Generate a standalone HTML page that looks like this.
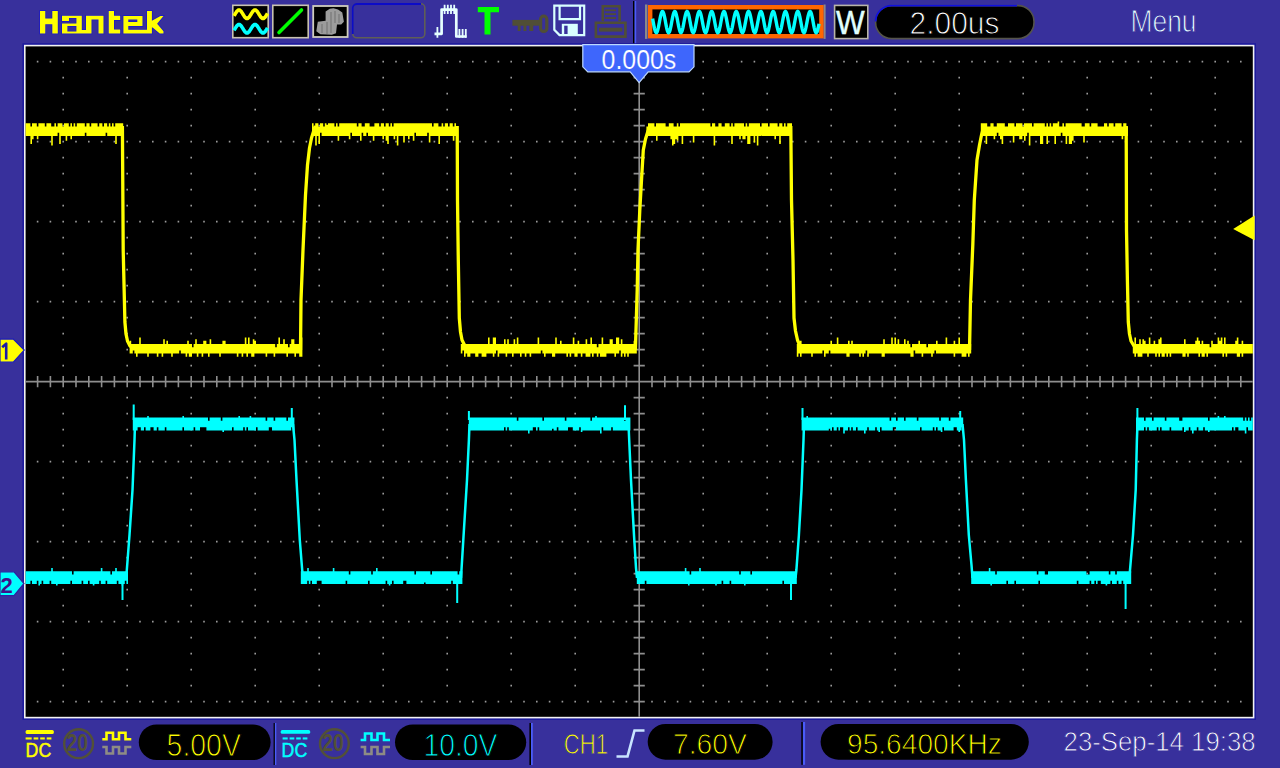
<!DOCTYPE html>
<html><head><meta charset="utf-8"><style>
html,body{margin:0;padding:0;width:1280px;height:768px;overflow:hidden;background:#38309c}
text{font-family:"Liberation Sans",sans-serif}
</style></head><body>
<svg width="1280" height="768" viewBox="0 0 1280 768" style="position:absolute;left:0;top:0">
<rect width="1280" height="768" fill="#38309c"/>
<rect x="22.4" y="43.2" width="1233.6" height="676.8" fill="#1c1a9c"/>
<rect x="24" y="44.8" width="1230.4" height="673.6" fill="#f2f2f2"/>
<rect x="25.6" y="46.4" width="1227.2" height="670.4" fill="#000"/>
<path d="M36.8 60.8h1.6v1.6h-1.6zM49.6 60.8h1.6v1.6h-1.6zM62.4 60.8h1.6v1.6h-1.6zM75.2 60.8h1.6v1.6h-1.6zM88.0 60.8h1.6v1.6h-1.6zM100.8 60.8h1.6v1.6h-1.6zM113.6 60.8h1.6v1.6h-1.6zM126.4 60.8h1.6v1.6h-1.6zM139.2 60.8h1.6v1.6h-1.6zM152.0 60.8h1.6v1.6h-1.6zM164.8 60.8h1.6v1.6h-1.6zM177.6 60.8h1.6v1.6h-1.6zM190.4 60.8h1.6v1.6h-1.6zM203.2 60.8h1.6v1.6h-1.6zM216.0 60.8h1.6v1.6h-1.6zM228.8 60.8h1.6v1.6h-1.6zM241.6 60.8h1.6v1.6h-1.6zM254.4 60.8h1.6v1.6h-1.6zM267.2 60.8h1.6v1.6h-1.6zM280.0 60.8h1.6v1.6h-1.6zM292.8 60.8h1.6v1.6h-1.6zM305.6 60.8h1.6v1.6h-1.6zM318.4 60.8h1.6v1.6h-1.6zM331.2 60.8h1.6v1.6h-1.6zM344.0 60.8h1.6v1.6h-1.6zM356.8 60.8h1.6v1.6h-1.6zM369.6 60.8h1.6v1.6h-1.6zM382.4 60.8h1.6v1.6h-1.6zM395.2 60.8h1.6v1.6h-1.6zM408.0 60.8h1.6v1.6h-1.6zM420.8 60.8h1.6v1.6h-1.6zM433.6 60.8h1.6v1.6h-1.6zM446.4 60.8h1.6v1.6h-1.6zM459.2 60.8h1.6v1.6h-1.6zM472.0 60.8h1.6v1.6h-1.6zM484.8 60.8h1.6v1.6h-1.6zM497.6 60.8h1.6v1.6h-1.6zM510.4 60.8h1.6v1.6h-1.6zM523.2 60.8h1.6v1.6h-1.6zM536.0 60.8h1.6v1.6h-1.6zM548.8 60.8h1.6v1.6h-1.6zM561.6 60.8h1.6v1.6h-1.6zM574.4 60.8h1.6v1.6h-1.6zM587.2 60.8h1.6v1.6h-1.6zM600.0 60.8h1.6v1.6h-1.6zM612.8 60.8h1.6v1.6h-1.6zM625.6 60.8h1.6v1.6h-1.6zM651.2 60.8h1.6v1.6h-1.6zM664.0 60.8h1.6v1.6h-1.6zM676.8 60.8h1.6v1.6h-1.6zM689.6 60.8h1.6v1.6h-1.6zM702.4 60.8h1.6v1.6h-1.6zM715.2 60.8h1.6v1.6h-1.6zM728.0 60.8h1.6v1.6h-1.6zM740.8 60.8h1.6v1.6h-1.6zM753.6 60.8h1.6v1.6h-1.6zM766.4 60.8h1.6v1.6h-1.6zM779.2 60.8h1.6v1.6h-1.6zM792.0 60.8h1.6v1.6h-1.6zM804.8 60.8h1.6v1.6h-1.6zM817.6 60.8h1.6v1.6h-1.6zM830.4 60.8h1.6v1.6h-1.6zM843.2 60.8h1.6v1.6h-1.6zM856.0 60.8h1.6v1.6h-1.6zM868.8 60.8h1.6v1.6h-1.6zM881.6 60.8h1.6v1.6h-1.6zM894.4 60.8h1.6v1.6h-1.6zM907.2 60.8h1.6v1.6h-1.6zM920.0 60.8h1.6v1.6h-1.6zM932.8 60.8h1.6v1.6h-1.6zM945.6 60.8h1.6v1.6h-1.6zM958.4 60.8h1.6v1.6h-1.6zM971.2 60.8h1.6v1.6h-1.6zM984.0 60.8h1.6v1.6h-1.6zM996.8 60.8h1.6v1.6h-1.6zM1009.6 60.8h1.6v1.6h-1.6zM1022.4 60.8h1.6v1.6h-1.6zM1035.2 60.8h1.6v1.6h-1.6zM1048.0 60.8h1.6v1.6h-1.6zM1060.8 60.8h1.6v1.6h-1.6zM1073.6 60.8h1.6v1.6h-1.6zM1086.4 60.8h1.6v1.6h-1.6zM1099.2 60.8h1.6v1.6h-1.6zM1112.0 60.8h1.6v1.6h-1.6zM1124.8 60.8h1.6v1.6h-1.6zM1137.6 60.8h1.6v1.6h-1.6zM1150.4 60.8h1.6v1.6h-1.6zM1163.2 60.8h1.6v1.6h-1.6zM1176.0 60.8h1.6v1.6h-1.6zM1188.8 60.8h1.6v1.6h-1.6zM1201.6 60.8h1.6v1.6h-1.6zM1214.4 60.8h1.6v1.6h-1.6zM1227.2 60.8h1.6v1.6h-1.6zM1240.0 60.8h1.6v1.6h-1.6zM36.8 140.8h1.6v1.6h-1.6zM49.6 140.8h1.6v1.6h-1.6zM62.4 140.8h1.6v1.6h-1.6zM75.2 140.8h1.6v1.6h-1.6zM88.0 140.8h1.6v1.6h-1.6zM100.8 140.8h1.6v1.6h-1.6zM113.6 140.8h1.6v1.6h-1.6zM126.4 140.8h1.6v1.6h-1.6zM139.2 140.8h1.6v1.6h-1.6zM152.0 140.8h1.6v1.6h-1.6zM164.8 140.8h1.6v1.6h-1.6zM177.6 140.8h1.6v1.6h-1.6zM190.4 140.8h1.6v1.6h-1.6zM203.2 140.8h1.6v1.6h-1.6zM216.0 140.8h1.6v1.6h-1.6zM228.8 140.8h1.6v1.6h-1.6zM241.6 140.8h1.6v1.6h-1.6zM254.4 140.8h1.6v1.6h-1.6zM267.2 140.8h1.6v1.6h-1.6zM280.0 140.8h1.6v1.6h-1.6zM292.8 140.8h1.6v1.6h-1.6zM305.6 140.8h1.6v1.6h-1.6zM318.4 140.8h1.6v1.6h-1.6zM331.2 140.8h1.6v1.6h-1.6zM344.0 140.8h1.6v1.6h-1.6zM356.8 140.8h1.6v1.6h-1.6zM369.6 140.8h1.6v1.6h-1.6zM382.4 140.8h1.6v1.6h-1.6zM395.2 140.8h1.6v1.6h-1.6zM408.0 140.8h1.6v1.6h-1.6zM420.8 140.8h1.6v1.6h-1.6zM433.6 140.8h1.6v1.6h-1.6zM446.4 140.8h1.6v1.6h-1.6zM459.2 140.8h1.6v1.6h-1.6zM472.0 140.8h1.6v1.6h-1.6zM484.8 140.8h1.6v1.6h-1.6zM497.6 140.8h1.6v1.6h-1.6zM510.4 140.8h1.6v1.6h-1.6zM523.2 140.8h1.6v1.6h-1.6zM536.0 140.8h1.6v1.6h-1.6zM548.8 140.8h1.6v1.6h-1.6zM561.6 140.8h1.6v1.6h-1.6zM574.4 140.8h1.6v1.6h-1.6zM587.2 140.8h1.6v1.6h-1.6zM600.0 140.8h1.6v1.6h-1.6zM612.8 140.8h1.6v1.6h-1.6zM625.6 140.8h1.6v1.6h-1.6zM651.2 140.8h1.6v1.6h-1.6zM664.0 140.8h1.6v1.6h-1.6zM676.8 140.8h1.6v1.6h-1.6zM689.6 140.8h1.6v1.6h-1.6zM702.4 140.8h1.6v1.6h-1.6zM715.2 140.8h1.6v1.6h-1.6zM728.0 140.8h1.6v1.6h-1.6zM740.8 140.8h1.6v1.6h-1.6zM753.6 140.8h1.6v1.6h-1.6zM766.4 140.8h1.6v1.6h-1.6zM779.2 140.8h1.6v1.6h-1.6zM792.0 140.8h1.6v1.6h-1.6zM804.8 140.8h1.6v1.6h-1.6zM817.6 140.8h1.6v1.6h-1.6zM830.4 140.8h1.6v1.6h-1.6zM843.2 140.8h1.6v1.6h-1.6zM856.0 140.8h1.6v1.6h-1.6zM868.8 140.8h1.6v1.6h-1.6zM881.6 140.8h1.6v1.6h-1.6zM894.4 140.8h1.6v1.6h-1.6zM907.2 140.8h1.6v1.6h-1.6zM920.0 140.8h1.6v1.6h-1.6zM932.8 140.8h1.6v1.6h-1.6zM945.6 140.8h1.6v1.6h-1.6zM958.4 140.8h1.6v1.6h-1.6zM971.2 140.8h1.6v1.6h-1.6zM984.0 140.8h1.6v1.6h-1.6zM996.8 140.8h1.6v1.6h-1.6zM1009.6 140.8h1.6v1.6h-1.6zM1022.4 140.8h1.6v1.6h-1.6zM1035.2 140.8h1.6v1.6h-1.6zM1048.0 140.8h1.6v1.6h-1.6zM1060.8 140.8h1.6v1.6h-1.6zM1073.6 140.8h1.6v1.6h-1.6zM1086.4 140.8h1.6v1.6h-1.6zM1099.2 140.8h1.6v1.6h-1.6zM1112.0 140.8h1.6v1.6h-1.6zM1124.8 140.8h1.6v1.6h-1.6zM1137.6 140.8h1.6v1.6h-1.6zM1150.4 140.8h1.6v1.6h-1.6zM1163.2 140.8h1.6v1.6h-1.6zM1176.0 140.8h1.6v1.6h-1.6zM1188.8 140.8h1.6v1.6h-1.6zM1201.6 140.8h1.6v1.6h-1.6zM1214.4 140.8h1.6v1.6h-1.6zM1227.2 140.8h1.6v1.6h-1.6zM1240.0 140.8h1.6v1.6h-1.6zM36.8 220.8h1.6v1.6h-1.6zM49.6 220.8h1.6v1.6h-1.6zM62.4 220.8h1.6v1.6h-1.6zM75.2 220.8h1.6v1.6h-1.6zM88.0 220.8h1.6v1.6h-1.6zM100.8 220.8h1.6v1.6h-1.6zM113.6 220.8h1.6v1.6h-1.6zM126.4 220.8h1.6v1.6h-1.6zM139.2 220.8h1.6v1.6h-1.6zM152.0 220.8h1.6v1.6h-1.6zM164.8 220.8h1.6v1.6h-1.6zM177.6 220.8h1.6v1.6h-1.6zM190.4 220.8h1.6v1.6h-1.6zM203.2 220.8h1.6v1.6h-1.6zM216.0 220.8h1.6v1.6h-1.6zM228.8 220.8h1.6v1.6h-1.6zM241.6 220.8h1.6v1.6h-1.6zM254.4 220.8h1.6v1.6h-1.6zM267.2 220.8h1.6v1.6h-1.6zM280.0 220.8h1.6v1.6h-1.6zM292.8 220.8h1.6v1.6h-1.6zM305.6 220.8h1.6v1.6h-1.6zM318.4 220.8h1.6v1.6h-1.6zM331.2 220.8h1.6v1.6h-1.6zM344.0 220.8h1.6v1.6h-1.6zM356.8 220.8h1.6v1.6h-1.6zM369.6 220.8h1.6v1.6h-1.6zM382.4 220.8h1.6v1.6h-1.6zM395.2 220.8h1.6v1.6h-1.6zM408.0 220.8h1.6v1.6h-1.6zM420.8 220.8h1.6v1.6h-1.6zM433.6 220.8h1.6v1.6h-1.6zM446.4 220.8h1.6v1.6h-1.6zM459.2 220.8h1.6v1.6h-1.6zM472.0 220.8h1.6v1.6h-1.6zM484.8 220.8h1.6v1.6h-1.6zM497.6 220.8h1.6v1.6h-1.6zM510.4 220.8h1.6v1.6h-1.6zM523.2 220.8h1.6v1.6h-1.6zM536.0 220.8h1.6v1.6h-1.6zM548.8 220.8h1.6v1.6h-1.6zM561.6 220.8h1.6v1.6h-1.6zM574.4 220.8h1.6v1.6h-1.6zM587.2 220.8h1.6v1.6h-1.6zM600.0 220.8h1.6v1.6h-1.6zM612.8 220.8h1.6v1.6h-1.6zM625.6 220.8h1.6v1.6h-1.6zM651.2 220.8h1.6v1.6h-1.6zM664.0 220.8h1.6v1.6h-1.6zM676.8 220.8h1.6v1.6h-1.6zM689.6 220.8h1.6v1.6h-1.6zM702.4 220.8h1.6v1.6h-1.6zM715.2 220.8h1.6v1.6h-1.6zM728.0 220.8h1.6v1.6h-1.6zM740.8 220.8h1.6v1.6h-1.6zM753.6 220.8h1.6v1.6h-1.6zM766.4 220.8h1.6v1.6h-1.6zM779.2 220.8h1.6v1.6h-1.6zM792.0 220.8h1.6v1.6h-1.6zM804.8 220.8h1.6v1.6h-1.6zM817.6 220.8h1.6v1.6h-1.6zM830.4 220.8h1.6v1.6h-1.6zM843.2 220.8h1.6v1.6h-1.6zM856.0 220.8h1.6v1.6h-1.6zM868.8 220.8h1.6v1.6h-1.6zM881.6 220.8h1.6v1.6h-1.6zM894.4 220.8h1.6v1.6h-1.6zM907.2 220.8h1.6v1.6h-1.6zM920.0 220.8h1.6v1.6h-1.6zM932.8 220.8h1.6v1.6h-1.6zM945.6 220.8h1.6v1.6h-1.6zM958.4 220.8h1.6v1.6h-1.6zM971.2 220.8h1.6v1.6h-1.6zM984.0 220.8h1.6v1.6h-1.6zM996.8 220.8h1.6v1.6h-1.6zM1009.6 220.8h1.6v1.6h-1.6zM1022.4 220.8h1.6v1.6h-1.6zM1035.2 220.8h1.6v1.6h-1.6zM1048.0 220.8h1.6v1.6h-1.6zM1060.8 220.8h1.6v1.6h-1.6zM1073.6 220.8h1.6v1.6h-1.6zM1086.4 220.8h1.6v1.6h-1.6zM1099.2 220.8h1.6v1.6h-1.6zM1112.0 220.8h1.6v1.6h-1.6zM1124.8 220.8h1.6v1.6h-1.6zM1137.6 220.8h1.6v1.6h-1.6zM1150.4 220.8h1.6v1.6h-1.6zM1163.2 220.8h1.6v1.6h-1.6zM1176.0 220.8h1.6v1.6h-1.6zM1188.8 220.8h1.6v1.6h-1.6zM1201.6 220.8h1.6v1.6h-1.6zM1214.4 220.8h1.6v1.6h-1.6zM1227.2 220.8h1.6v1.6h-1.6zM1240.0 220.8h1.6v1.6h-1.6zM36.8 300.8h1.6v1.6h-1.6zM49.6 300.8h1.6v1.6h-1.6zM62.4 300.8h1.6v1.6h-1.6zM75.2 300.8h1.6v1.6h-1.6zM88.0 300.8h1.6v1.6h-1.6zM100.8 300.8h1.6v1.6h-1.6zM113.6 300.8h1.6v1.6h-1.6zM126.4 300.8h1.6v1.6h-1.6zM139.2 300.8h1.6v1.6h-1.6zM152.0 300.8h1.6v1.6h-1.6zM164.8 300.8h1.6v1.6h-1.6zM177.6 300.8h1.6v1.6h-1.6zM190.4 300.8h1.6v1.6h-1.6zM203.2 300.8h1.6v1.6h-1.6zM216.0 300.8h1.6v1.6h-1.6zM228.8 300.8h1.6v1.6h-1.6zM241.6 300.8h1.6v1.6h-1.6zM254.4 300.8h1.6v1.6h-1.6zM267.2 300.8h1.6v1.6h-1.6zM280.0 300.8h1.6v1.6h-1.6zM292.8 300.8h1.6v1.6h-1.6zM305.6 300.8h1.6v1.6h-1.6zM318.4 300.8h1.6v1.6h-1.6zM331.2 300.8h1.6v1.6h-1.6zM344.0 300.8h1.6v1.6h-1.6zM356.8 300.8h1.6v1.6h-1.6zM369.6 300.8h1.6v1.6h-1.6zM382.4 300.8h1.6v1.6h-1.6zM395.2 300.8h1.6v1.6h-1.6zM408.0 300.8h1.6v1.6h-1.6zM420.8 300.8h1.6v1.6h-1.6zM433.6 300.8h1.6v1.6h-1.6zM446.4 300.8h1.6v1.6h-1.6zM459.2 300.8h1.6v1.6h-1.6zM472.0 300.8h1.6v1.6h-1.6zM484.8 300.8h1.6v1.6h-1.6zM497.6 300.8h1.6v1.6h-1.6zM510.4 300.8h1.6v1.6h-1.6zM523.2 300.8h1.6v1.6h-1.6zM536.0 300.8h1.6v1.6h-1.6zM548.8 300.8h1.6v1.6h-1.6zM561.6 300.8h1.6v1.6h-1.6zM574.4 300.8h1.6v1.6h-1.6zM587.2 300.8h1.6v1.6h-1.6zM600.0 300.8h1.6v1.6h-1.6zM612.8 300.8h1.6v1.6h-1.6zM625.6 300.8h1.6v1.6h-1.6zM651.2 300.8h1.6v1.6h-1.6zM664.0 300.8h1.6v1.6h-1.6zM676.8 300.8h1.6v1.6h-1.6zM689.6 300.8h1.6v1.6h-1.6zM702.4 300.8h1.6v1.6h-1.6zM715.2 300.8h1.6v1.6h-1.6zM728.0 300.8h1.6v1.6h-1.6zM740.8 300.8h1.6v1.6h-1.6zM753.6 300.8h1.6v1.6h-1.6zM766.4 300.8h1.6v1.6h-1.6zM779.2 300.8h1.6v1.6h-1.6zM792.0 300.8h1.6v1.6h-1.6zM804.8 300.8h1.6v1.6h-1.6zM817.6 300.8h1.6v1.6h-1.6zM830.4 300.8h1.6v1.6h-1.6zM843.2 300.8h1.6v1.6h-1.6zM856.0 300.8h1.6v1.6h-1.6zM868.8 300.8h1.6v1.6h-1.6zM881.6 300.8h1.6v1.6h-1.6zM894.4 300.8h1.6v1.6h-1.6zM907.2 300.8h1.6v1.6h-1.6zM920.0 300.8h1.6v1.6h-1.6zM932.8 300.8h1.6v1.6h-1.6zM945.6 300.8h1.6v1.6h-1.6zM958.4 300.8h1.6v1.6h-1.6zM971.2 300.8h1.6v1.6h-1.6zM984.0 300.8h1.6v1.6h-1.6zM996.8 300.8h1.6v1.6h-1.6zM1009.6 300.8h1.6v1.6h-1.6zM1022.4 300.8h1.6v1.6h-1.6zM1035.2 300.8h1.6v1.6h-1.6zM1048.0 300.8h1.6v1.6h-1.6zM1060.8 300.8h1.6v1.6h-1.6zM1073.6 300.8h1.6v1.6h-1.6zM1086.4 300.8h1.6v1.6h-1.6zM1099.2 300.8h1.6v1.6h-1.6zM1112.0 300.8h1.6v1.6h-1.6zM1124.8 300.8h1.6v1.6h-1.6zM1137.6 300.8h1.6v1.6h-1.6zM1150.4 300.8h1.6v1.6h-1.6zM1163.2 300.8h1.6v1.6h-1.6zM1176.0 300.8h1.6v1.6h-1.6zM1188.8 300.8h1.6v1.6h-1.6zM1201.6 300.8h1.6v1.6h-1.6zM1214.4 300.8h1.6v1.6h-1.6zM1227.2 300.8h1.6v1.6h-1.6zM1240.0 300.8h1.6v1.6h-1.6zM36.8 460.8h1.6v1.6h-1.6zM49.6 460.8h1.6v1.6h-1.6zM62.4 460.8h1.6v1.6h-1.6zM75.2 460.8h1.6v1.6h-1.6zM88.0 460.8h1.6v1.6h-1.6zM100.8 460.8h1.6v1.6h-1.6zM113.6 460.8h1.6v1.6h-1.6zM126.4 460.8h1.6v1.6h-1.6zM139.2 460.8h1.6v1.6h-1.6zM152.0 460.8h1.6v1.6h-1.6zM164.8 460.8h1.6v1.6h-1.6zM177.6 460.8h1.6v1.6h-1.6zM190.4 460.8h1.6v1.6h-1.6zM203.2 460.8h1.6v1.6h-1.6zM216.0 460.8h1.6v1.6h-1.6zM228.8 460.8h1.6v1.6h-1.6zM241.6 460.8h1.6v1.6h-1.6zM254.4 460.8h1.6v1.6h-1.6zM267.2 460.8h1.6v1.6h-1.6zM280.0 460.8h1.6v1.6h-1.6zM292.8 460.8h1.6v1.6h-1.6zM305.6 460.8h1.6v1.6h-1.6zM318.4 460.8h1.6v1.6h-1.6zM331.2 460.8h1.6v1.6h-1.6zM344.0 460.8h1.6v1.6h-1.6zM356.8 460.8h1.6v1.6h-1.6zM369.6 460.8h1.6v1.6h-1.6zM382.4 460.8h1.6v1.6h-1.6zM395.2 460.8h1.6v1.6h-1.6zM408.0 460.8h1.6v1.6h-1.6zM420.8 460.8h1.6v1.6h-1.6zM433.6 460.8h1.6v1.6h-1.6zM446.4 460.8h1.6v1.6h-1.6zM459.2 460.8h1.6v1.6h-1.6zM472.0 460.8h1.6v1.6h-1.6zM484.8 460.8h1.6v1.6h-1.6zM497.6 460.8h1.6v1.6h-1.6zM510.4 460.8h1.6v1.6h-1.6zM523.2 460.8h1.6v1.6h-1.6zM536.0 460.8h1.6v1.6h-1.6zM548.8 460.8h1.6v1.6h-1.6zM561.6 460.8h1.6v1.6h-1.6zM574.4 460.8h1.6v1.6h-1.6zM587.2 460.8h1.6v1.6h-1.6zM600.0 460.8h1.6v1.6h-1.6zM612.8 460.8h1.6v1.6h-1.6zM625.6 460.8h1.6v1.6h-1.6zM651.2 460.8h1.6v1.6h-1.6zM664.0 460.8h1.6v1.6h-1.6zM676.8 460.8h1.6v1.6h-1.6zM689.6 460.8h1.6v1.6h-1.6zM702.4 460.8h1.6v1.6h-1.6zM715.2 460.8h1.6v1.6h-1.6zM728.0 460.8h1.6v1.6h-1.6zM740.8 460.8h1.6v1.6h-1.6zM753.6 460.8h1.6v1.6h-1.6zM766.4 460.8h1.6v1.6h-1.6zM779.2 460.8h1.6v1.6h-1.6zM792.0 460.8h1.6v1.6h-1.6zM804.8 460.8h1.6v1.6h-1.6zM817.6 460.8h1.6v1.6h-1.6zM830.4 460.8h1.6v1.6h-1.6zM843.2 460.8h1.6v1.6h-1.6zM856.0 460.8h1.6v1.6h-1.6zM868.8 460.8h1.6v1.6h-1.6zM881.6 460.8h1.6v1.6h-1.6zM894.4 460.8h1.6v1.6h-1.6zM907.2 460.8h1.6v1.6h-1.6zM920.0 460.8h1.6v1.6h-1.6zM932.8 460.8h1.6v1.6h-1.6zM945.6 460.8h1.6v1.6h-1.6zM958.4 460.8h1.6v1.6h-1.6zM971.2 460.8h1.6v1.6h-1.6zM984.0 460.8h1.6v1.6h-1.6zM996.8 460.8h1.6v1.6h-1.6zM1009.6 460.8h1.6v1.6h-1.6zM1022.4 460.8h1.6v1.6h-1.6zM1035.2 460.8h1.6v1.6h-1.6zM1048.0 460.8h1.6v1.6h-1.6zM1060.8 460.8h1.6v1.6h-1.6zM1073.6 460.8h1.6v1.6h-1.6zM1086.4 460.8h1.6v1.6h-1.6zM1099.2 460.8h1.6v1.6h-1.6zM1112.0 460.8h1.6v1.6h-1.6zM1124.8 460.8h1.6v1.6h-1.6zM1137.6 460.8h1.6v1.6h-1.6zM1150.4 460.8h1.6v1.6h-1.6zM1163.2 460.8h1.6v1.6h-1.6zM1176.0 460.8h1.6v1.6h-1.6zM1188.8 460.8h1.6v1.6h-1.6zM1201.6 460.8h1.6v1.6h-1.6zM1214.4 460.8h1.6v1.6h-1.6zM1227.2 460.8h1.6v1.6h-1.6zM1240.0 460.8h1.6v1.6h-1.6zM36.8 540.8h1.6v1.6h-1.6zM49.6 540.8h1.6v1.6h-1.6zM62.4 540.8h1.6v1.6h-1.6zM75.2 540.8h1.6v1.6h-1.6zM88.0 540.8h1.6v1.6h-1.6zM100.8 540.8h1.6v1.6h-1.6zM113.6 540.8h1.6v1.6h-1.6zM126.4 540.8h1.6v1.6h-1.6zM139.2 540.8h1.6v1.6h-1.6zM152.0 540.8h1.6v1.6h-1.6zM164.8 540.8h1.6v1.6h-1.6zM177.6 540.8h1.6v1.6h-1.6zM190.4 540.8h1.6v1.6h-1.6zM203.2 540.8h1.6v1.6h-1.6zM216.0 540.8h1.6v1.6h-1.6zM228.8 540.8h1.6v1.6h-1.6zM241.6 540.8h1.6v1.6h-1.6zM254.4 540.8h1.6v1.6h-1.6zM267.2 540.8h1.6v1.6h-1.6zM280.0 540.8h1.6v1.6h-1.6zM292.8 540.8h1.6v1.6h-1.6zM305.6 540.8h1.6v1.6h-1.6zM318.4 540.8h1.6v1.6h-1.6zM331.2 540.8h1.6v1.6h-1.6zM344.0 540.8h1.6v1.6h-1.6zM356.8 540.8h1.6v1.6h-1.6zM369.6 540.8h1.6v1.6h-1.6zM382.4 540.8h1.6v1.6h-1.6zM395.2 540.8h1.6v1.6h-1.6zM408.0 540.8h1.6v1.6h-1.6zM420.8 540.8h1.6v1.6h-1.6zM433.6 540.8h1.6v1.6h-1.6zM446.4 540.8h1.6v1.6h-1.6zM459.2 540.8h1.6v1.6h-1.6zM472.0 540.8h1.6v1.6h-1.6zM484.8 540.8h1.6v1.6h-1.6zM497.6 540.8h1.6v1.6h-1.6zM510.4 540.8h1.6v1.6h-1.6zM523.2 540.8h1.6v1.6h-1.6zM536.0 540.8h1.6v1.6h-1.6zM548.8 540.8h1.6v1.6h-1.6zM561.6 540.8h1.6v1.6h-1.6zM574.4 540.8h1.6v1.6h-1.6zM587.2 540.8h1.6v1.6h-1.6zM600.0 540.8h1.6v1.6h-1.6zM612.8 540.8h1.6v1.6h-1.6zM625.6 540.8h1.6v1.6h-1.6zM651.2 540.8h1.6v1.6h-1.6zM664.0 540.8h1.6v1.6h-1.6zM676.8 540.8h1.6v1.6h-1.6zM689.6 540.8h1.6v1.6h-1.6zM702.4 540.8h1.6v1.6h-1.6zM715.2 540.8h1.6v1.6h-1.6zM728.0 540.8h1.6v1.6h-1.6zM740.8 540.8h1.6v1.6h-1.6zM753.6 540.8h1.6v1.6h-1.6zM766.4 540.8h1.6v1.6h-1.6zM779.2 540.8h1.6v1.6h-1.6zM792.0 540.8h1.6v1.6h-1.6zM804.8 540.8h1.6v1.6h-1.6zM817.6 540.8h1.6v1.6h-1.6zM830.4 540.8h1.6v1.6h-1.6zM843.2 540.8h1.6v1.6h-1.6zM856.0 540.8h1.6v1.6h-1.6zM868.8 540.8h1.6v1.6h-1.6zM881.6 540.8h1.6v1.6h-1.6zM894.4 540.8h1.6v1.6h-1.6zM907.2 540.8h1.6v1.6h-1.6zM920.0 540.8h1.6v1.6h-1.6zM932.8 540.8h1.6v1.6h-1.6zM945.6 540.8h1.6v1.6h-1.6zM958.4 540.8h1.6v1.6h-1.6zM971.2 540.8h1.6v1.6h-1.6zM984.0 540.8h1.6v1.6h-1.6zM996.8 540.8h1.6v1.6h-1.6zM1009.6 540.8h1.6v1.6h-1.6zM1022.4 540.8h1.6v1.6h-1.6zM1035.2 540.8h1.6v1.6h-1.6zM1048.0 540.8h1.6v1.6h-1.6zM1060.8 540.8h1.6v1.6h-1.6zM1073.6 540.8h1.6v1.6h-1.6zM1086.4 540.8h1.6v1.6h-1.6zM1099.2 540.8h1.6v1.6h-1.6zM1112.0 540.8h1.6v1.6h-1.6zM1124.8 540.8h1.6v1.6h-1.6zM1137.6 540.8h1.6v1.6h-1.6zM1150.4 540.8h1.6v1.6h-1.6zM1163.2 540.8h1.6v1.6h-1.6zM1176.0 540.8h1.6v1.6h-1.6zM1188.8 540.8h1.6v1.6h-1.6zM1201.6 540.8h1.6v1.6h-1.6zM1214.4 540.8h1.6v1.6h-1.6zM1227.2 540.8h1.6v1.6h-1.6zM1240.0 540.8h1.6v1.6h-1.6zM36.8 620.8h1.6v1.6h-1.6zM49.6 620.8h1.6v1.6h-1.6zM62.4 620.8h1.6v1.6h-1.6zM75.2 620.8h1.6v1.6h-1.6zM88.0 620.8h1.6v1.6h-1.6zM100.8 620.8h1.6v1.6h-1.6zM113.6 620.8h1.6v1.6h-1.6zM126.4 620.8h1.6v1.6h-1.6zM139.2 620.8h1.6v1.6h-1.6zM152.0 620.8h1.6v1.6h-1.6zM164.8 620.8h1.6v1.6h-1.6zM177.6 620.8h1.6v1.6h-1.6zM190.4 620.8h1.6v1.6h-1.6zM203.2 620.8h1.6v1.6h-1.6zM216.0 620.8h1.6v1.6h-1.6zM228.8 620.8h1.6v1.6h-1.6zM241.6 620.8h1.6v1.6h-1.6zM254.4 620.8h1.6v1.6h-1.6zM267.2 620.8h1.6v1.6h-1.6zM280.0 620.8h1.6v1.6h-1.6zM292.8 620.8h1.6v1.6h-1.6zM305.6 620.8h1.6v1.6h-1.6zM318.4 620.8h1.6v1.6h-1.6zM331.2 620.8h1.6v1.6h-1.6zM344.0 620.8h1.6v1.6h-1.6zM356.8 620.8h1.6v1.6h-1.6zM369.6 620.8h1.6v1.6h-1.6zM382.4 620.8h1.6v1.6h-1.6zM395.2 620.8h1.6v1.6h-1.6zM408.0 620.8h1.6v1.6h-1.6zM420.8 620.8h1.6v1.6h-1.6zM433.6 620.8h1.6v1.6h-1.6zM446.4 620.8h1.6v1.6h-1.6zM459.2 620.8h1.6v1.6h-1.6zM472.0 620.8h1.6v1.6h-1.6zM484.8 620.8h1.6v1.6h-1.6zM497.6 620.8h1.6v1.6h-1.6zM510.4 620.8h1.6v1.6h-1.6zM523.2 620.8h1.6v1.6h-1.6zM536.0 620.8h1.6v1.6h-1.6zM548.8 620.8h1.6v1.6h-1.6zM561.6 620.8h1.6v1.6h-1.6zM574.4 620.8h1.6v1.6h-1.6zM587.2 620.8h1.6v1.6h-1.6zM600.0 620.8h1.6v1.6h-1.6zM612.8 620.8h1.6v1.6h-1.6zM625.6 620.8h1.6v1.6h-1.6zM651.2 620.8h1.6v1.6h-1.6zM664.0 620.8h1.6v1.6h-1.6zM676.8 620.8h1.6v1.6h-1.6zM689.6 620.8h1.6v1.6h-1.6zM702.4 620.8h1.6v1.6h-1.6zM715.2 620.8h1.6v1.6h-1.6zM728.0 620.8h1.6v1.6h-1.6zM740.8 620.8h1.6v1.6h-1.6zM753.6 620.8h1.6v1.6h-1.6zM766.4 620.8h1.6v1.6h-1.6zM779.2 620.8h1.6v1.6h-1.6zM792.0 620.8h1.6v1.6h-1.6zM804.8 620.8h1.6v1.6h-1.6zM817.6 620.8h1.6v1.6h-1.6zM830.4 620.8h1.6v1.6h-1.6zM843.2 620.8h1.6v1.6h-1.6zM856.0 620.8h1.6v1.6h-1.6zM868.8 620.8h1.6v1.6h-1.6zM881.6 620.8h1.6v1.6h-1.6zM894.4 620.8h1.6v1.6h-1.6zM907.2 620.8h1.6v1.6h-1.6zM920.0 620.8h1.6v1.6h-1.6zM932.8 620.8h1.6v1.6h-1.6zM945.6 620.8h1.6v1.6h-1.6zM958.4 620.8h1.6v1.6h-1.6zM971.2 620.8h1.6v1.6h-1.6zM984.0 620.8h1.6v1.6h-1.6zM996.8 620.8h1.6v1.6h-1.6zM1009.6 620.8h1.6v1.6h-1.6zM1022.4 620.8h1.6v1.6h-1.6zM1035.2 620.8h1.6v1.6h-1.6zM1048.0 620.8h1.6v1.6h-1.6zM1060.8 620.8h1.6v1.6h-1.6zM1073.6 620.8h1.6v1.6h-1.6zM1086.4 620.8h1.6v1.6h-1.6zM1099.2 620.8h1.6v1.6h-1.6zM1112.0 620.8h1.6v1.6h-1.6zM1124.8 620.8h1.6v1.6h-1.6zM1137.6 620.8h1.6v1.6h-1.6zM1150.4 620.8h1.6v1.6h-1.6zM1163.2 620.8h1.6v1.6h-1.6zM1176.0 620.8h1.6v1.6h-1.6zM1188.8 620.8h1.6v1.6h-1.6zM1201.6 620.8h1.6v1.6h-1.6zM1214.4 620.8h1.6v1.6h-1.6zM1227.2 620.8h1.6v1.6h-1.6zM1240.0 620.8h1.6v1.6h-1.6zM36.8 700.8h1.6v1.6h-1.6zM49.6 700.8h1.6v1.6h-1.6zM62.4 700.8h1.6v1.6h-1.6zM75.2 700.8h1.6v1.6h-1.6zM88.0 700.8h1.6v1.6h-1.6zM100.8 700.8h1.6v1.6h-1.6zM113.6 700.8h1.6v1.6h-1.6zM126.4 700.8h1.6v1.6h-1.6zM139.2 700.8h1.6v1.6h-1.6zM152.0 700.8h1.6v1.6h-1.6zM164.8 700.8h1.6v1.6h-1.6zM177.6 700.8h1.6v1.6h-1.6zM190.4 700.8h1.6v1.6h-1.6zM203.2 700.8h1.6v1.6h-1.6zM216.0 700.8h1.6v1.6h-1.6zM228.8 700.8h1.6v1.6h-1.6zM241.6 700.8h1.6v1.6h-1.6zM254.4 700.8h1.6v1.6h-1.6zM267.2 700.8h1.6v1.6h-1.6zM280.0 700.8h1.6v1.6h-1.6zM292.8 700.8h1.6v1.6h-1.6zM305.6 700.8h1.6v1.6h-1.6zM318.4 700.8h1.6v1.6h-1.6zM331.2 700.8h1.6v1.6h-1.6zM344.0 700.8h1.6v1.6h-1.6zM356.8 700.8h1.6v1.6h-1.6zM369.6 700.8h1.6v1.6h-1.6zM382.4 700.8h1.6v1.6h-1.6zM395.2 700.8h1.6v1.6h-1.6zM408.0 700.8h1.6v1.6h-1.6zM420.8 700.8h1.6v1.6h-1.6zM433.6 700.8h1.6v1.6h-1.6zM446.4 700.8h1.6v1.6h-1.6zM459.2 700.8h1.6v1.6h-1.6zM472.0 700.8h1.6v1.6h-1.6zM484.8 700.8h1.6v1.6h-1.6zM497.6 700.8h1.6v1.6h-1.6zM510.4 700.8h1.6v1.6h-1.6zM523.2 700.8h1.6v1.6h-1.6zM536.0 700.8h1.6v1.6h-1.6zM548.8 700.8h1.6v1.6h-1.6zM561.6 700.8h1.6v1.6h-1.6zM574.4 700.8h1.6v1.6h-1.6zM587.2 700.8h1.6v1.6h-1.6zM600.0 700.8h1.6v1.6h-1.6zM612.8 700.8h1.6v1.6h-1.6zM625.6 700.8h1.6v1.6h-1.6zM651.2 700.8h1.6v1.6h-1.6zM664.0 700.8h1.6v1.6h-1.6zM676.8 700.8h1.6v1.6h-1.6zM689.6 700.8h1.6v1.6h-1.6zM702.4 700.8h1.6v1.6h-1.6zM715.2 700.8h1.6v1.6h-1.6zM728.0 700.8h1.6v1.6h-1.6zM740.8 700.8h1.6v1.6h-1.6zM753.6 700.8h1.6v1.6h-1.6zM766.4 700.8h1.6v1.6h-1.6zM779.2 700.8h1.6v1.6h-1.6zM792.0 700.8h1.6v1.6h-1.6zM804.8 700.8h1.6v1.6h-1.6zM817.6 700.8h1.6v1.6h-1.6zM830.4 700.8h1.6v1.6h-1.6zM843.2 700.8h1.6v1.6h-1.6zM856.0 700.8h1.6v1.6h-1.6zM868.8 700.8h1.6v1.6h-1.6zM881.6 700.8h1.6v1.6h-1.6zM894.4 700.8h1.6v1.6h-1.6zM907.2 700.8h1.6v1.6h-1.6zM920.0 700.8h1.6v1.6h-1.6zM932.8 700.8h1.6v1.6h-1.6zM945.6 700.8h1.6v1.6h-1.6zM958.4 700.8h1.6v1.6h-1.6zM971.2 700.8h1.6v1.6h-1.6zM984.0 700.8h1.6v1.6h-1.6zM996.8 700.8h1.6v1.6h-1.6zM1009.6 700.8h1.6v1.6h-1.6zM1022.4 700.8h1.6v1.6h-1.6zM1035.2 700.8h1.6v1.6h-1.6zM1048.0 700.8h1.6v1.6h-1.6zM1060.8 700.8h1.6v1.6h-1.6zM1073.6 700.8h1.6v1.6h-1.6zM1086.4 700.8h1.6v1.6h-1.6zM1099.2 700.8h1.6v1.6h-1.6zM1112.0 700.8h1.6v1.6h-1.6zM1124.8 700.8h1.6v1.6h-1.6zM1137.6 700.8h1.6v1.6h-1.6zM1150.4 700.8h1.6v1.6h-1.6zM1163.2 700.8h1.6v1.6h-1.6zM1176.0 700.8h1.6v1.6h-1.6zM1188.8 700.8h1.6v1.6h-1.6zM1201.6 700.8h1.6v1.6h-1.6zM1214.4 700.8h1.6v1.6h-1.6zM1227.2 700.8h1.6v1.6h-1.6zM1240.0 700.8h1.6v1.6h-1.6zM62.4 76.8h1.6v1.6h-1.6zM62.4 92.8h1.6v1.6h-1.6zM62.4 108.8h1.6v1.6h-1.6zM62.4 124.8h1.6v1.6h-1.6zM62.4 156.8h1.6v1.6h-1.6zM62.4 172.8h1.6v1.6h-1.6zM62.4 188.8h1.6v1.6h-1.6zM62.4 204.8h1.6v1.6h-1.6zM62.4 236.8h1.6v1.6h-1.6zM62.4 252.8h1.6v1.6h-1.6zM62.4 268.8h1.6v1.6h-1.6zM62.4 284.8h1.6v1.6h-1.6zM62.4 316.8h1.6v1.6h-1.6zM62.4 332.8h1.6v1.6h-1.6zM62.4 348.8h1.6v1.6h-1.6zM62.4 364.8h1.6v1.6h-1.6zM62.4 396.8h1.6v1.6h-1.6zM62.4 412.8h1.6v1.6h-1.6zM62.4 428.8h1.6v1.6h-1.6zM62.4 444.8h1.6v1.6h-1.6zM62.4 476.8h1.6v1.6h-1.6zM62.4 492.8h1.6v1.6h-1.6zM62.4 508.8h1.6v1.6h-1.6zM62.4 524.8h1.6v1.6h-1.6zM62.4 556.8h1.6v1.6h-1.6zM62.4 572.8h1.6v1.6h-1.6zM62.4 588.8h1.6v1.6h-1.6zM62.4 604.8h1.6v1.6h-1.6zM62.4 636.8h1.6v1.6h-1.6zM62.4 652.8h1.6v1.6h-1.6zM62.4 668.8h1.6v1.6h-1.6zM62.4 684.8h1.6v1.6h-1.6zM126.4 76.8h1.6v1.6h-1.6zM126.4 92.8h1.6v1.6h-1.6zM126.4 108.8h1.6v1.6h-1.6zM126.4 124.8h1.6v1.6h-1.6zM126.4 156.8h1.6v1.6h-1.6zM126.4 172.8h1.6v1.6h-1.6zM126.4 188.8h1.6v1.6h-1.6zM126.4 204.8h1.6v1.6h-1.6zM126.4 236.8h1.6v1.6h-1.6zM126.4 252.8h1.6v1.6h-1.6zM126.4 268.8h1.6v1.6h-1.6zM126.4 284.8h1.6v1.6h-1.6zM126.4 316.8h1.6v1.6h-1.6zM126.4 332.8h1.6v1.6h-1.6zM126.4 348.8h1.6v1.6h-1.6zM126.4 364.8h1.6v1.6h-1.6zM126.4 396.8h1.6v1.6h-1.6zM126.4 412.8h1.6v1.6h-1.6zM126.4 428.8h1.6v1.6h-1.6zM126.4 444.8h1.6v1.6h-1.6zM126.4 476.8h1.6v1.6h-1.6zM126.4 492.8h1.6v1.6h-1.6zM126.4 508.8h1.6v1.6h-1.6zM126.4 524.8h1.6v1.6h-1.6zM126.4 556.8h1.6v1.6h-1.6zM126.4 572.8h1.6v1.6h-1.6zM126.4 588.8h1.6v1.6h-1.6zM126.4 604.8h1.6v1.6h-1.6zM126.4 636.8h1.6v1.6h-1.6zM126.4 652.8h1.6v1.6h-1.6zM126.4 668.8h1.6v1.6h-1.6zM126.4 684.8h1.6v1.6h-1.6zM190.4 76.8h1.6v1.6h-1.6zM190.4 92.8h1.6v1.6h-1.6zM190.4 108.8h1.6v1.6h-1.6zM190.4 124.8h1.6v1.6h-1.6zM190.4 156.8h1.6v1.6h-1.6zM190.4 172.8h1.6v1.6h-1.6zM190.4 188.8h1.6v1.6h-1.6zM190.4 204.8h1.6v1.6h-1.6zM190.4 236.8h1.6v1.6h-1.6zM190.4 252.8h1.6v1.6h-1.6zM190.4 268.8h1.6v1.6h-1.6zM190.4 284.8h1.6v1.6h-1.6zM190.4 316.8h1.6v1.6h-1.6zM190.4 332.8h1.6v1.6h-1.6zM190.4 348.8h1.6v1.6h-1.6zM190.4 364.8h1.6v1.6h-1.6zM190.4 396.8h1.6v1.6h-1.6zM190.4 412.8h1.6v1.6h-1.6zM190.4 428.8h1.6v1.6h-1.6zM190.4 444.8h1.6v1.6h-1.6zM190.4 476.8h1.6v1.6h-1.6zM190.4 492.8h1.6v1.6h-1.6zM190.4 508.8h1.6v1.6h-1.6zM190.4 524.8h1.6v1.6h-1.6zM190.4 556.8h1.6v1.6h-1.6zM190.4 572.8h1.6v1.6h-1.6zM190.4 588.8h1.6v1.6h-1.6zM190.4 604.8h1.6v1.6h-1.6zM190.4 636.8h1.6v1.6h-1.6zM190.4 652.8h1.6v1.6h-1.6zM190.4 668.8h1.6v1.6h-1.6zM190.4 684.8h1.6v1.6h-1.6zM254.4 76.8h1.6v1.6h-1.6zM254.4 92.8h1.6v1.6h-1.6zM254.4 108.8h1.6v1.6h-1.6zM254.4 124.8h1.6v1.6h-1.6zM254.4 156.8h1.6v1.6h-1.6zM254.4 172.8h1.6v1.6h-1.6zM254.4 188.8h1.6v1.6h-1.6zM254.4 204.8h1.6v1.6h-1.6zM254.4 236.8h1.6v1.6h-1.6zM254.4 252.8h1.6v1.6h-1.6zM254.4 268.8h1.6v1.6h-1.6zM254.4 284.8h1.6v1.6h-1.6zM254.4 316.8h1.6v1.6h-1.6zM254.4 332.8h1.6v1.6h-1.6zM254.4 348.8h1.6v1.6h-1.6zM254.4 364.8h1.6v1.6h-1.6zM254.4 396.8h1.6v1.6h-1.6zM254.4 412.8h1.6v1.6h-1.6zM254.4 428.8h1.6v1.6h-1.6zM254.4 444.8h1.6v1.6h-1.6zM254.4 476.8h1.6v1.6h-1.6zM254.4 492.8h1.6v1.6h-1.6zM254.4 508.8h1.6v1.6h-1.6zM254.4 524.8h1.6v1.6h-1.6zM254.4 556.8h1.6v1.6h-1.6zM254.4 572.8h1.6v1.6h-1.6zM254.4 588.8h1.6v1.6h-1.6zM254.4 604.8h1.6v1.6h-1.6zM254.4 636.8h1.6v1.6h-1.6zM254.4 652.8h1.6v1.6h-1.6zM254.4 668.8h1.6v1.6h-1.6zM254.4 684.8h1.6v1.6h-1.6zM318.4 76.8h1.6v1.6h-1.6zM318.4 92.8h1.6v1.6h-1.6zM318.4 108.8h1.6v1.6h-1.6zM318.4 124.8h1.6v1.6h-1.6zM318.4 156.8h1.6v1.6h-1.6zM318.4 172.8h1.6v1.6h-1.6zM318.4 188.8h1.6v1.6h-1.6zM318.4 204.8h1.6v1.6h-1.6zM318.4 236.8h1.6v1.6h-1.6zM318.4 252.8h1.6v1.6h-1.6zM318.4 268.8h1.6v1.6h-1.6zM318.4 284.8h1.6v1.6h-1.6zM318.4 316.8h1.6v1.6h-1.6zM318.4 332.8h1.6v1.6h-1.6zM318.4 348.8h1.6v1.6h-1.6zM318.4 364.8h1.6v1.6h-1.6zM318.4 396.8h1.6v1.6h-1.6zM318.4 412.8h1.6v1.6h-1.6zM318.4 428.8h1.6v1.6h-1.6zM318.4 444.8h1.6v1.6h-1.6zM318.4 476.8h1.6v1.6h-1.6zM318.4 492.8h1.6v1.6h-1.6zM318.4 508.8h1.6v1.6h-1.6zM318.4 524.8h1.6v1.6h-1.6zM318.4 556.8h1.6v1.6h-1.6zM318.4 572.8h1.6v1.6h-1.6zM318.4 588.8h1.6v1.6h-1.6zM318.4 604.8h1.6v1.6h-1.6zM318.4 636.8h1.6v1.6h-1.6zM318.4 652.8h1.6v1.6h-1.6zM318.4 668.8h1.6v1.6h-1.6zM318.4 684.8h1.6v1.6h-1.6zM382.4 76.8h1.6v1.6h-1.6zM382.4 92.8h1.6v1.6h-1.6zM382.4 108.8h1.6v1.6h-1.6zM382.4 124.8h1.6v1.6h-1.6zM382.4 156.8h1.6v1.6h-1.6zM382.4 172.8h1.6v1.6h-1.6zM382.4 188.8h1.6v1.6h-1.6zM382.4 204.8h1.6v1.6h-1.6zM382.4 236.8h1.6v1.6h-1.6zM382.4 252.8h1.6v1.6h-1.6zM382.4 268.8h1.6v1.6h-1.6zM382.4 284.8h1.6v1.6h-1.6zM382.4 316.8h1.6v1.6h-1.6zM382.4 332.8h1.6v1.6h-1.6zM382.4 348.8h1.6v1.6h-1.6zM382.4 364.8h1.6v1.6h-1.6zM382.4 396.8h1.6v1.6h-1.6zM382.4 412.8h1.6v1.6h-1.6zM382.4 428.8h1.6v1.6h-1.6zM382.4 444.8h1.6v1.6h-1.6zM382.4 476.8h1.6v1.6h-1.6zM382.4 492.8h1.6v1.6h-1.6zM382.4 508.8h1.6v1.6h-1.6zM382.4 524.8h1.6v1.6h-1.6zM382.4 556.8h1.6v1.6h-1.6zM382.4 572.8h1.6v1.6h-1.6zM382.4 588.8h1.6v1.6h-1.6zM382.4 604.8h1.6v1.6h-1.6zM382.4 636.8h1.6v1.6h-1.6zM382.4 652.8h1.6v1.6h-1.6zM382.4 668.8h1.6v1.6h-1.6zM382.4 684.8h1.6v1.6h-1.6zM446.4 76.8h1.6v1.6h-1.6zM446.4 92.8h1.6v1.6h-1.6zM446.4 108.8h1.6v1.6h-1.6zM446.4 124.8h1.6v1.6h-1.6zM446.4 156.8h1.6v1.6h-1.6zM446.4 172.8h1.6v1.6h-1.6zM446.4 188.8h1.6v1.6h-1.6zM446.4 204.8h1.6v1.6h-1.6zM446.4 236.8h1.6v1.6h-1.6zM446.4 252.8h1.6v1.6h-1.6zM446.4 268.8h1.6v1.6h-1.6zM446.4 284.8h1.6v1.6h-1.6zM446.4 316.8h1.6v1.6h-1.6zM446.4 332.8h1.6v1.6h-1.6zM446.4 348.8h1.6v1.6h-1.6zM446.4 364.8h1.6v1.6h-1.6zM446.4 396.8h1.6v1.6h-1.6zM446.4 412.8h1.6v1.6h-1.6zM446.4 428.8h1.6v1.6h-1.6zM446.4 444.8h1.6v1.6h-1.6zM446.4 476.8h1.6v1.6h-1.6zM446.4 492.8h1.6v1.6h-1.6zM446.4 508.8h1.6v1.6h-1.6zM446.4 524.8h1.6v1.6h-1.6zM446.4 556.8h1.6v1.6h-1.6zM446.4 572.8h1.6v1.6h-1.6zM446.4 588.8h1.6v1.6h-1.6zM446.4 604.8h1.6v1.6h-1.6zM446.4 636.8h1.6v1.6h-1.6zM446.4 652.8h1.6v1.6h-1.6zM446.4 668.8h1.6v1.6h-1.6zM446.4 684.8h1.6v1.6h-1.6zM510.4 76.8h1.6v1.6h-1.6zM510.4 92.8h1.6v1.6h-1.6zM510.4 108.8h1.6v1.6h-1.6zM510.4 124.8h1.6v1.6h-1.6zM510.4 156.8h1.6v1.6h-1.6zM510.4 172.8h1.6v1.6h-1.6zM510.4 188.8h1.6v1.6h-1.6zM510.4 204.8h1.6v1.6h-1.6zM510.4 236.8h1.6v1.6h-1.6zM510.4 252.8h1.6v1.6h-1.6zM510.4 268.8h1.6v1.6h-1.6zM510.4 284.8h1.6v1.6h-1.6zM510.4 316.8h1.6v1.6h-1.6zM510.4 332.8h1.6v1.6h-1.6zM510.4 348.8h1.6v1.6h-1.6zM510.4 364.8h1.6v1.6h-1.6zM510.4 396.8h1.6v1.6h-1.6zM510.4 412.8h1.6v1.6h-1.6zM510.4 428.8h1.6v1.6h-1.6zM510.4 444.8h1.6v1.6h-1.6zM510.4 476.8h1.6v1.6h-1.6zM510.4 492.8h1.6v1.6h-1.6zM510.4 508.8h1.6v1.6h-1.6zM510.4 524.8h1.6v1.6h-1.6zM510.4 556.8h1.6v1.6h-1.6zM510.4 572.8h1.6v1.6h-1.6zM510.4 588.8h1.6v1.6h-1.6zM510.4 604.8h1.6v1.6h-1.6zM510.4 636.8h1.6v1.6h-1.6zM510.4 652.8h1.6v1.6h-1.6zM510.4 668.8h1.6v1.6h-1.6zM510.4 684.8h1.6v1.6h-1.6zM574.4 76.8h1.6v1.6h-1.6zM574.4 92.8h1.6v1.6h-1.6zM574.4 108.8h1.6v1.6h-1.6zM574.4 124.8h1.6v1.6h-1.6zM574.4 156.8h1.6v1.6h-1.6zM574.4 172.8h1.6v1.6h-1.6zM574.4 188.8h1.6v1.6h-1.6zM574.4 204.8h1.6v1.6h-1.6zM574.4 236.8h1.6v1.6h-1.6zM574.4 252.8h1.6v1.6h-1.6zM574.4 268.8h1.6v1.6h-1.6zM574.4 284.8h1.6v1.6h-1.6zM574.4 316.8h1.6v1.6h-1.6zM574.4 332.8h1.6v1.6h-1.6zM574.4 348.8h1.6v1.6h-1.6zM574.4 364.8h1.6v1.6h-1.6zM574.4 396.8h1.6v1.6h-1.6zM574.4 412.8h1.6v1.6h-1.6zM574.4 428.8h1.6v1.6h-1.6zM574.4 444.8h1.6v1.6h-1.6zM574.4 476.8h1.6v1.6h-1.6zM574.4 492.8h1.6v1.6h-1.6zM574.4 508.8h1.6v1.6h-1.6zM574.4 524.8h1.6v1.6h-1.6zM574.4 556.8h1.6v1.6h-1.6zM574.4 572.8h1.6v1.6h-1.6zM574.4 588.8h1.6v1.6h-1.6zM574.4 604.8h1.6v1.6h-1.6zM574.4 636.8h1.6v1.6h-1.6zM574.4 652.8h1.6v1.6h-1.6zM574.4 668.8h1.6v1.6h-1.6zM574.4 684.8h1.6v1.6h-1.6zM702.4 76.8h1.6v1.6h-1.6zM702.4 92.8h1.6v1.6h-1.6zM702.4 108.8h1.6v1.6h-1.6zM702.4 124.8h1.6v1.6h-1.6zM702.4 156.8h1.6v1.6h-1.6zM702.4 172.8h1.6v1.6h-1.6zM702.4 188.8h1.6v1.6h-1.6zM702.4 204.8h1.6v1.6h-1.6zM702.4 236.8h1.6v1.6h-1.6zM702.4 252.8h1.6v1.6h-1.6zM702.4 268.8h1.6v1.6h-1.6zM702.4 284.8h1.6v1.6h-1.6zM702.4 316.8h1.6v1.6h-1.6zM702.4 332.8h1.6v1.6h-1.6zM702.4 348.8h1.6v1.6h-1.6zM702.4 364.8h1.6v1.6h-1.6zM702.4 396.8h1.6v1.6h-1.6zM702.4 412.8h1.6v1.6h-1.6zM702.4 428.8h1.6v1.6h-1.6zM702.4 444.8h1.6v1.6h-1.6zM702.4 476.8h1.6v1.6h-1.6zM702.4 492.8h1.6v1.6h-1.6zM702.4 508.8h1.6v1.6h-1.6zM702.4 524.8h1.6v1.6h-1.6zM702.4 556.8h1.6v1.6h-1.6zM702.4 572.8h1.6v1.6h-1.6zM702.4 588.8h1.6v1.6h-1.6zM702.4 604.8h1.6v1.6h-1.6zM702.4 636.8h1.6v1.6h-1.6zM702.4 652.8h1.6v1.6h-1.6zM702.4 668.8h1.6v1.6h-1.6zM702.4 684.8h1.6v1.6h-1.6zM766.4 76.8h1.6v1.6h-1.6zM766.4 92.8h1.6v1.6h-1.6zM766.4 108.8h1.6v1.6h-1.6zM766.4 124.8h1.6v1.6h-1.6zM766.4 156.8h1.6v1.6h-1.6zM766.4 172.8h1.6v1.6h-1.6zM766.4 188.8h1.6v1.6h-1.6zM766.4 204.8h1.6v1.6h-1.6zM766.4 236.8h1.6v1.6h-1.6zM766.4 252.8h1.6v1.6h-1.6zM766.4 268.8h1.6v1.6h-1.6zM766.4 284.8h1.6v1.6h-1.6zM766.4 316.8h1.6v1.6h-1.6zM766.4 332.8h1.6v1.6h-1.6zM766.4 348.8h1.6v1.6h-1.6zM766.4 364.8h1.6v1.6h-1.6zM766.4 396.8h1.6v1.6h-1.6zM766.4 412.8h1.6v1.6h-1.6zM766.4 428.8h1.6v1.6h-1.6zM766.4 444.8h1.6v1.6h-1.6zM766.4 476.8h1.6v1.6h-1.6zM766.4 492.8h1.6v1.6h-1.6zM766.4 508.8h1.6v1.6h-1.6zM766.4 524.8h1.6v1.6h-1.6zM766.4 556.8h1.6v1.6h-1.6zM766.4 572.8h1.6v1.6h-1.6zM766.4 588.8h1.6v1.6h-1.6zM766.4 604.8h1.6v1.6h-1.6zM766.4 636.8h1.6v1.6h-1.6zM766.4 652.8h1.6v1.6h-1.6zM766.4 668.8h1.6v1.6h-1.6zM766.4 684.8h1.6v1.6h-1.6zM830.4 76.8h1.6v1.6h-1.6zM830.4 92.8h1.6v1.6h-1.6zM830.4 108.8h1.6v1.6h-1.6zM830.4 124.8h1.6v1.6h-1.6zM830.4 156.8h1.6v1.6h-1.6zM830.4 172.8h1.6v1.6h-1.6zM830.4 188.8h1.6v1.6h-1.6zM830.4 204.8h1.6v1.6h-1.6zM830.4 236.8h1.6v1.6h-1.6zM830.4 252.8h1.6v1.6h-1.6zM830.4 268.8h1.6v1.6h-1.6zM830.4 284.8h1.6v1.6h-1.6zM830.4 316.8h1.6v1.6h-1.6zM830.4 332.8h1.6v1.6h-1.6zM830.4 348.8h1.6v1.6h-1.6zM830.4 364.8h1.6v1.6h-1.6zM830.4 396.8h1.6v1.6h-1.6zM830.4 412.8h1.6v1.6h-1.6zM830.4 428.8h1.6v1.6h-1.6zM830.4 444.8h1.6v1.6h-1.6zM830.4 476.8h1.6v1.6h-1.6zM830.4 492.8h1.6v1.6h-1.6zM830.4 508.8h1.6v1.6h-1.6zM830.4 524.8h1.6v1.6h-1.6zM830.4 556.8h1.6v1.6h-1.6zM830.4 572.8h1.6v1.6h-1.6zM830.4 588.8h1.6v1.6h-1.6zM830.4 604.8h1.6v1.6h-1.6zM830.4 636.8h1.6v1.6h-1.6zM830.4 652.8h1.6v1.6h-1.6zM830.4 668.8h1.6v1.6h-1.6zM830.4 684.8h1.6v1.6h-1.6zM894.4 76.8h1.6v1.6h-1.6zM894.4 92.8h1.6v1.6h-1.6zM894.4 108.8h1.6v1.6h-1.6zM894.4 124.8h1.6v1.6h-1.6zM894.4 156.8h1.6v1.6h-1.6zM894.4 172.8h1.6v1.6h-1.6zM894.4 188.8h1.6v1.6h-1.6zM894.4 204.8h1.6v1.6h-1.6zM894.4 236.8h1.6v1.6h-1.6zM894.4 252.8h1.6v1.6h-1.6zM894.4 268.8h1.6v1.6h-1.6zM894.4 284.8h1.6v1.6h-1.6zM894.4 316.8h1.6v1.6h-1.6zM894.4 332.8h1.6v1.6h-1.6zM894.4 348.8h1.6v1.6h-1.6zM894.4 364.8h1.6v1.6h-1.6zM894.4 396.8h1.6v1.6h-1.6zM894.4 412.8h1.6v1.6h-1.6zM894.4 428.8h1.6v1.6h-1.6zM894.4 444.8h1.6v1.6h-1.6zM894.4 476.8h1.6v1.6h-1.6zM894.4 492.8h1.6v1.6h-1.6zM894.4 508.8h1.6v1.6h-1.6zM894.4 524.8h1.6v1.6h-1.6zM894.4 556.8h1.6v1.6h-1.6zM894.4 572.8h1.6v1.6h-1.6zM894.4 588.8h1.6v1.6h-1.6zM894.4 604.8h1.6v1.6h-1.6zM894.4 636.8h1.6v1.6h-1.6zM894.4 652.8h1.6v1.6h-1.6zM894.4 668.8h1.6v1.6h-1.6zM894.4 684.8h1.6v1.6h-1.6zM958.4 76.8h1.6v1.6h-1.6zM958.4 92.8h1.6v1.6h-1.6zM958.4 108.8h1.6v1.6h-1.6zM958.4 124.8h1.6v1.6h-1.6zM958.4 156.8h1.6v1.6h-1.6zM958.4 172.8h1.6v1.6h-1.6zM958.4 188.8h1.6v1.6h-1.6zM958.4 204.8h1.6v1.6h-1.6zM958.4 236.8h1.6v1.6h-1.6zM958.4 252.8h1.6v1.6h-1.6zM958.4 268.8h1.6v1.6h-1.6zM958.4 284.8h1.6v1.6h-1.6zM958.4 316.8h1.6v1.6h-1.6zM958.4 332.8h1.6v1.6h-1.6zM958.4 348.8h1.6v1.6h-1.6zM958.4 364.8h1.6v1.6h-1.6zM958.4 396.8h1.6v1.6h-1.6zM958.4 412.8h1.6v1.6h-1.6zM958.4 428.8h1.6v1.6h-1.6zM958.4 444.8h1.6v1.6h-1.6zM958.4 476.8h1.6v1.6h-1.6zM958.4 492.8h1.6v1.6h-1.6zM958.4 508.8h1.6v1.6h-1.6zM958.4 524.8h1.6v1.6h-1.6zM958.4 556.8h1.6v1.6h-1.6zM958.4 572.8h1.6v1.6h-1.6zM958.4 588.8h1.6v1.6h-1.6zM958.4 604.8h1.6v1.6h-1.6zM958.4 636.8h1.6v1.6h-1.6zM958.4 652.8h1.6v1.6h-1.6zM958.4 668.8h1.6v1.6h-1.6zM958.4 684.8h1.6v1.6h-1.6zM1022.4 76.8h1.6v1.6h-1.6zM1022.4 92.8h1.6v1.6h-1.6zM1022.4 108.8h1.6v1.6h-1.6zM1022.4 124.8h1.6v1.6h-1.6zM1022.4 156.8h1.6v1.6h-1.6zM1022.4 172.8h1.6v1.6h-1.6zM1022.4 188.8h1.6v1.6h-1.6zM1022.4 204.8h1.6v1.6h-1.6zM1022.4 236.8h1.6v1.6h-1.6zM1022.4 252.8h1.6v1.6h-1.6zM1022.4 268.8h1.6v1.6h-1.6zM1022.4 284.8h1.6v1.6h-1.6zM1022.4 316.8h1.6v1.6h-1.6zM1022.4 332.8h1.6v1.6h-1.6zM1022.4 348.8h1.6v1.6h-1.6zM1022.4 364.8h1.6v1.6h-1.6zM1022.4 396.8h1.6v1.6h-1.6zM1022.4 412.8h1.6v1.6h-1.6zM1022.4 428.8h1.6v1.6h-1.6zM1022.4 444.8h1.6v1.6h-1.6zM1022.4 476.8h1.6v1.6h-1.6zM1022.4 492.8h1.6v1.6h-1.6zM1022.4 508.8h1.6v1.6h-1.6zM1022.4 524.8h1.6v1.6h-1.6zM1022.4 556.8h1.6v1.6h-1.6zM1022.4 572.8h1.6v1.6h-1.6zM1022.4 588.8h1.6v1.6h-1.6zM1022.4 604.8h1.6v1.6h-1.6zM1022.4 636.8h1.6v1.6h-1.6zM1022.4 652.8h1.6v1.6h-1.6zM1022.4 668.8h1.6v1.6h-1.6zM1022.4 684.8h1.6v1.6h-1.6zM1086.4 76.8h1.6v1.6h-1.6zM1086.4 92.8h1.6v1.6h-1.6zM1086.4 108.8h1.6v1.6h-1.6zM1086.4 124.8h1.6v1.6h-1.6zM1086.4 156.8h1.6v1.6h-1.6zM1086.4 172.8h1.6v1.6h-1.6zM1086.4 188.8h1.6v1.6h-1.6zM1086.4 204.8h1.6v1.6h-1.6zM1086.4 236.8h1.6v1.6h-1.6zM1086.4 252.8h1.6v1.6h-1.6zM1086.4 268.8h1.6v1.6h-1.6zM1086.4 284.8h1.6v1.6h-1.6zM1086.4 316.8h1.6v1.6h-1.6zM1086.4 332.8h1.6v1.6h-1.6zM1086.4 348.8h1.6v1.6h-1.6zM1086.4 364.8h1.6v1.6h-1.6zM1086.4 396.8h1.6v1.6h-1.6zM1086.4 412.8h1.6v1.6h-1.6zM1086.4 428.8h1.6v1.6h-1.6zM1086.4 444.8h1.6v1.6h-1.6zM1086.4 476.8h1.6v1.6h-1.6zM1086.4 492.8h1.6v1.6h-1.6zM1086.4 508.8h1.6v1.6h-1.6zM1086.4 524.8h1.6v1.6h-1.6zM1086.4 556.8h1.6v1.6h-1.6zM1086.4 572.8h1.6v1.6h-1.6zM1086.4 588.8h1.6v1.6h-1.6zM1086.4 604.8h1.6v1.6h-1.6zM1086.4 636.8h1.6v1.6h-1.6zM1086.4 652.8h1.6v1.6h-1.6zM1086.4 668.8h1.6v1.6h-1.6zM1086.4 684.8h1.6v1.6h-1.6zM1150.4 76.8h1.6v1.6h-1.6zM1150.4 92.8h1.6v1.6h-1.6zM1150.4 108.8h1.6v1.6h-1.6zM1150.4 124.8h1.6v1.6h-1.6zM1150.4 156.8h1.6v1.6h-1.6zM1150.4 172.8h1.6v1.6h-1.6zM1150.4 188.8h1.6v1.6h-1.6zM1150.4 204.8h1.6v1.6h-1.6zM1150.4 236.8h1.6v1.6h-1.6zM1150.4 252.8h1.6v1.6h-1.6zM1150.4 268.8h1.6v1.6h-1.6zM1150.4 284.8h1.6v1.6h-1.6zM1150.4 316.8h1.6v1.6h-1.6zM1150.4 332.8h1.6v1.6h-1.6zM1150.4 348.8h1.6v1.6h-1.6zM1150.4 364.8h1.6v1.6h-1.6zM1150.4 396.8h1.6v1.6h-1.6zM1150.4 412.8h1.6v1.6h-1.6zM1150.4 428.8h1.6v1.6h-1.6zM1150.4 444.8h1.6v1.6h-1.6zM1150.4 476.8h1.6v1.6h-1.6zM1150.4 492.8h1.6v1.6h-1.6zM1150.4 508.8h1.6v1.6h-1.6zM1150.4 524.8h1.6v1.6h-1.6zM1150.4 556.8h1.6v1.6h-1.6zM1150.4 572.8h1.6v1.6h-1.6zM1150.4 588.8h1.6v1.6h-1.6zM1150.4 604.8h1.6v1.6h-1.6zM1150.4 636.8h1.6v1.6h-1.6zM1150.4 652.8h1.6v1.6h-1.6zM1150.4 668.8h1.6v1.6h-1.6zM1150.4 684.8h1.6v1.6h-1.6zM1214.4 76.8h1.6v1.6h-1.6zM1214.4 92.8h1.6v1.6h-1.6zM1214.4 108.8h1.6v1.6h-1.6zM1214.4 124.8h1.6v1.6h-1.6zM1214.4 156.8h1.6v1.6h-1.6zM1214.4 172.8h1.6v1.6h-1.6zM1214.4 188.8h1.6v1.6h-1.6zM1214.4 204.8h1.6v1.6h-1.6zM1214.4 236.8h1.6v1.6h-1.6zM1214.4 252.8h1.6v1.6h-1.6zM1214.4 268.8h1.6v1.6h-1.6zM1214.4 284.8h1.6v1.6h-1.6zM1214.4 316.8h1.6v1.6h-1.6zM1214.4 332.8h1.6v1.6h-1.6zM1214.4 348.8h1.6v1.6h-1.6zM1214.4 364.8h1.6v1.6h-1.6zM1214.4 396.8h1.6v1.6h-1.6zM1214.4 412.8h1.6v1.6h-1.6zM1214.4 428.8h1.6v1.6h-1.6zM1214.4 444.8h1.6v1.6h-1.6zM1214.4 476.8h1.6v1.6h-1.6zM1214.4 492.8h1.6v1.6h-1.6zM1214.4 508.8h1.6v1.6h-1.6zM1214.4 524.8h1.6v1.6h-1.6zM1214.4 556.8h1.6v1.6h-1.6zM1214.4 572.8h1.6v1.6h-1.6zM1214.4 588.8h1.6v1.6h-1.6zM1214.4 604.8h1.6v1.6h-1.6zM1214.4 636.8h1.6v1.6h-1.6zM1214.4 652.8h1.6v1.6h-1.6zM1214.4 668.8h1.6v1.6h-1.6zM1214.4 684.8h1.6v1.6h-1.6z" fill="#9a9a9a"/>
<path d="M25.6 380.8H1252.8v1.6H25.6zM638.4 46.4h1.6V716.8h-1.6zM36.8 376.0h1.6v11.2h-1.6zM49.6 376.0h1.6v11.2h-1.6zM62.4 376.0h1.6v11.2h-1.6zM75.2 376.0h1.6v11.2h-1.6zM88.0 376.0h1.6v11.2h-1.6zM100.8 376.0h1.6v11.2h-1.6zM113.6 376.0h1.6v11.2h-1.6zM126.4 376.0h1.6v11.2h-1.6zM139.2 376.0h1.6v11.2h-1.6zM152.0 376.0h1.6v11.2h-1.6zM164.8 376.0h1.6v11.2h-1.6zM177.6 376.0h1.6v11.2h-1.6zM190.4 376.0h1.6v11.2h-1.6zM203.2 376.0h1.6v11.2h-1.6zM216.0 376.0h1.6v11.2h-1.6zM228.8 376.0h1.6v11.2h-1.6zM241.6 376.0h1.6v11.2h-1.6zM254.4 376.0h1.6v11.2h-1.6zM267.2 376.0h1.6v11.2h-1.6zM280.0 376.0h1.6v11.2h-1.6zM292.8 376.0h1.6v11.2h-1.6zM305.6 376.0h1.6v11.2h-1.6zM318.4 376.0h1.6v11.2h-1.6zM331.2 376.0h1.6v11.2h-1.6zM344.0 376.0h1.6v11.2h-1.6zM356.8 376.0h1.6v11.2h-1.6zM369.6 376.0h1.6v11.2h-1.6zM382.4 376.0h1.6v11.2h-1.6zM395.2 376.0h1.6v11.2h-1.6zM408.0 376.0h1.6v11.2h-1.6zM420.8 376.0h1.6v11.2h-1.6zM433.6 376.0h1.6v11.2h-1.6zM446.4 376.0h1.6v11.2h-1.6zM459.2 376.0h1.6v11.2h-1.6zM472.0 376.0h1.6v11.2h-1.6zM484.8 376.0h1.6v11.2h-1.6zM497.6 376.0h1.6v11.2h-1.6zM510.4 376.0h1.6v11.2h-1.6zM523.2 376.0h1.6v11.2h-1.6zM536.0 376.0h1.6v11.2h-1.6zM548.8 376.0h1.6v11.2h-1.6zM561.6 376.0h1.6v11.2h-1.6zM574.4 376.0h1.6v11.2h-1.6zM587.2 376.0h1.6v11.2h-1.6zM600.0 376.0h1.6v11.2h-1.6zM612.8 376.0h1.6v11.2h-1.6zM625.6 376.0h1.6v11.2h-1.6zM638.4 376.0h1.6v11.2h-1.6zM651.2 376.0h1.6v11.2h-1.6zM664.0 376.0h1.6v11.2h-1.6zM676.8 376.0h1.6v11.2h-1.6zM689.6 376.0h1.6v11.2h-1.6zM702.4 376.0h1.6v11.2h-1.6zM715.2 376.0h1.6v11.2h-1.6zM728.0 376.0h1.6v11.2h-1.6zM740.8 376.0h1.6v11.2h-1.6zM753.6 376.0h1.6v11.2h-1.6zM766.4 376.0h1.6v11.2h-1.6zM779.2 376.0h1.6v11.2h-1.6zM792.0 376.0h1.6v11.2h-1.6zM804.8 376.0h1.6v11.2h-1.6zM817.6 376.0h1.6v11.2h-1.6zM830.4 376.0h1.6v11.2h-1.6zM843.2 376.0h1.6v11.2h-1.6zM856.0 376.0h1.6v11.2h-1.6zM868.8 376.0h1.6v11.2h-1.6zM881.6 376.0h1.6v11.2h-1.6zM894.4 376.0h1.6v11.2h-1.6zM907.2 376.0h1.6v11.2h-1.6zM920.0 376.0h1.6v11.2h-1.6zM932.8 376.0h1.6v11.2h-1.6zM945.6 376.0h1.6v11.2h-1.6zM958.4 376.0h1.6v11.2h-1.6zM971.2 376.0h1.6v11.2h-1.6zM984.0 376.0h1.6v11.2h-1.6zM996.8 376.0h1.6v11.2h-1.6zM1009.6 376.0h1.6v11.2h-1.6zM1022.4 376.0h1.6v11.2h-1.6zM1035.2 376.0h1.6v11.2h-1.6zM1048.0 376.0h1.6v11.2h-1.6zM1060.8 376.0h1.6v11.2h-1.6zM1073.6 376.0h1.6v11.2h-1.6zM1086.4 376.0h1.6v11.2h-1.6zM1099.2 376.0h1.6v11.2h-1.6zM1112.0 376.0h1.6v11.2h-1.6zM1124.8 376.0h1.6v11.2h-1.6zM1137.6 376.0h1.6v11.2h-1.6zM1150.4 376.0h1.6v11.2h-1.6zM1163.2 376.0h1.6v11.2h-1.6zM1176.0 376.0h1.6v11.2h-1.6zM1188.8 376.0h1.6v11.2h-1.6zM1201.6 376.0h1.6v11.2h-1.6zM1214.4 376.0h1.6v11.2h-1.6zM1227.2 376.0h1.6v11.2h-1.6zM1240.0 376.0h1.6v11.2h-1.6zM633.6 60.8h11.2v1.6h-11.2zM633.6 76.8h11.2v1.6h-11.2zM633.6 92.8h11.2v1.6h-11.2zM633.6 108.8h11.2v1.6h-11.2zM633.6 124.8h11.2v1.6h-11.2zM633.6 140.8h11.2v1.6h-11.2zM633.6 156.8h11.2v1.6h-11.2zM633.6 172.8h11.2v1.6h-11.2zM633.6 188.8h11.2v1.6h-11.2zM633.6 204.8h11.2v1.6h-11.2zM633.6 220.8h11.2v1.6h-11.2zM633.6 236.8h11.2v1.6h-11.2zM633.6 252.8h11.2v1.6h-11.2zM633.6 268.8h11.2v1.6h-11.2zM633.6 284.8h11.2v1.6h-11.2zM633.6 300.8h11.2v1.6h-11.2zM633.6 316.8h11.2v1.6h-11.2zM633.6 332.8h11.2v1.6h-11.2zM633.6 348.8h11.2v1.6h-11.2zM633.6 364.8h11.2v1.6h-11.2zM633.6 380.8h11.2v1.6h-11.2zM633.6 396.8h11.2v1.6h-11.2zM633.6 412.8h11.2v1.6h-11.2zM633.6 428.8h11.2v1.6h-11.2zM633.6 444.8h11.2v1.6h-11.2zM633.6 460.8h11.2v1.6h-11.2zM633.6 476.8h11.2v1.6h-11.2zM633.6 492.8h11.2v1.6h-11.2zM633.6 508.8h11.2v1.6h-11.2zM633.6 524.8h11.2v1.6h-11.2zM633.6 540.8h11.2v1.6h-11.2zM633.6 556.8h11.2v1.6h-11.2zM633.6 572.8h11.2v1.6h-11.2zM633.6 588.8h11.2v1.6h-11.2zM633.6 604.8h11.2v1.6h-11.2zM633.6 620.8h11.2v1.6h-11.2zM633.6 636.8h11.2v1.6h-11.2zM633.6 652.8h11.2v1.6h-11.2zM633.6 668.8h11.2v1.6h-11.2zM633.6 684.8h11.2v1.6h-11.2zM633.6 700.8h11.2v1.6h-11.2z" fill="#8e8e8e"/>
<path d="M25.6 123.2h1.6V136.0h-1.6zM27.2 123.2h1.6V136.0h-1.6zM28.8 123.2h1.6V136.0h-1.6zM30.4 126.4h1.6V144.0h-1.6zM32.0 123.2h1.6V139.2h-1.6zM33.6 123.2h1.6V136.0h-1.6zM35.2 123.2h1.6V136.0h-1.6zM36.8 126.4h1.6V139.2h-1.6zM38.4 123.2h1.6V136.0h-1.6zM40.0 123.2h1.6V136.0h-1.6zM41.6 123.2h1.6V136.0h-1.6zM43.2 123.2h1.6V136.0h-1.6zM44.8 126.4h1.6V136.0h-1.6zM46.4 123.2h1.6V136.0h-1.6zM48.0 123.2h1.6V136.0h-1.6zM49.6 123.2h1.6V136.0h-1.6zM51.2 126.4h1.6V145.6h-1.6zM52.8 126.4h1.6V136.0h-1.6zM54.4 123.2h1.6V136.0h-1.6zM56.0 126.4h1.6V136.0h-1.6zM57.6 123.2h1.6V132.8h-1.6zM59.2 123.2h1.6V144.0h-1.6zM60.8 123.2h1.6V136.0h-1.6zM62.4 126.4h1.6V136.0h-1.6zM64.0 123.2h1.6V136.0h-1.6zM65.6 123.2h1.6V140.8h-1.6zM67.2 123.2h1.6V136.0h-1.6zM68.8 126.4h1.6V136.0h-1.6zM70.4 123.2h1.6V139.2h-1.6zM72.0 126.4h1.6V136.0h-1.6zM73.6 123.2h1.6V136.0h-1.6zM75.2 126.4h1.6V136.0h-1.6zM76.8 123.2h1.6V136.0h-1.6zM78.4 123.2h1.6V136.0h-1.6zM80.0 123.2h1.6V136.0h-1.6zM81.6 123.2h1.6V136.0h-1.6zM83.2 123.2h1.6V136.0h-1.6zM84.8 126.4h1.6V132.8h-1.6zM86.4 123.2h1.6V136.0h-1.6zM88.0 123.2h1.6V136.0h-1.6zM89.6 126.4h1.6V136.0h-1.6zM91.2 123.2h1.6V136.0h-1.6zM92.8 123.2h1.6V136.0h-1.6zM94.4 123.2h1.6V136.0h-1.6zM96.0 123.2h1.6V136.0h-1.6zM97.6 126.4h1.6V136.0h-1.6zM99.2 123.2h1.6V136.0h-1.6zM100.8 123.2h1.6V136.0h-1.6zM102.4 126.4h1.6V136.0h-1.6zM104.0 123.2h1.6V136.0h-1.6zM105.6 123.2h1.6V132.8h-1.6zM107.2 126.4h1.6V136.0h-1.6zM108.8 123.2h1.6V136.0h-1.6zM110.4 126.4h1.6V136.0h-1.6zM112.0 123.2h1.6V136.0h-1.6zM113.6 126.4h1.6V136.0h-1.6zM115.2 123.2h1.6V144.0h-1.6zM116.8 123.2h1.6V136.0h-1.6zM118.4 123.2h1.6V136.0h-1.6zM120.0 123.2h1.6V136.0h-1.6zM121.6 123.2h1.6V136.0h-1.6zM312.0 123.2h1.6V136.0h-1.6zM313.6 126.4h1.6V136.0h-1.6zM315.2 123.2h1.6V145.6h-1.6zM316.8 123.2h1.6V136.0h-1.6zM318.4 126.4h1.6V144.0h-1.6zM320.0 123.2h1.6V132.8h-1.6zM321.6 123.2h1.6V136.0h-1.6zM323.2 126.4h1.6V136.0h-1.6zM324.8 123.2h1.6V136.0h-1.6zM326.4 124.8h1.6V136.0h-1.6zM328.0 123.2h1.6V136.0h-1.6zM329.6 123.2h1.6V136.0h-1.6zM331.2 123.2h1.6V136.0h-1.6zM332.8 123.2h1.6V136.0h-1.6zM334.4 126.4h1.6V136.0h-1.6zM336.0 123.2h1.6V136.0h-1.6zM337.6 126.4h1.6V140.8h-1.6zM339.2 123.2h1.6V136.0h-1.6zM340.8 123.2h1.6V136.0h-1.6zM342.4 123.2h1.6V136.0h-1.6zM344.0 123.2h1.6V136.0h-1.6zM345.6 123.2h1.6V136.0h-1.6zM347.2 123.2h1.6V136.0h-1.6zM348.8 123.2h1.6V139.2h-1.6zM350.4 123.2h1.6V132.8h-1.6zM352.0 123.2h1.6V136.0h-1.6zM353.6 123.2h1.6V136.0h-1.6zM355.2 123.2h1.6V136.0h-1.6zM356.8 126.4h1.6V136.0h-1.6zM358.4 123.2h1.6V136.0h-1.6zM360.0 123.2h1.6V140.8h-1.6zM361.6 126.4h1.6V132.8h-1.6zM363.2 126.4h1.6V136.0h-1.6zM364.8 123.2h1.6V136.0h-1.6zM366.4 123.2h1.6V132.8h-1.6zM368.0 123.2h1.6V136.0h-1.6zM369.6 126.4h1.6V136.0h-1.6zM371.2 126.4h1.6V136.0h-1.6zM372.8 126.4h1.6V140.8h-1.6zM374.4 123.2h1.6V136.0h-1.6zM376.0 123.2h1.6V136.0h-1.6zM377.6 123.2h1.6V136.0h-1.6zM379.2 126.4h1.6V136.0h-1.6zM380.8 123.2h1.6V136.0h-1.6zM382.4 123.2h1.6V139.2h-1.6zM384.0 126.4h1.6V136.0h-1.6zM385.6 123.2h1.6V140.8h-1.6zM387.2 123.2h1.6V144.0h-1.6zM388.8 126.4h1.6V136.0h-1.6zM390.4 123.2h1.6V136.0h-1.6zM392.0 126.4h1.6V136.0h-1.6zM393.6 123.2h1.6V139.2h-1.6zM395.2 123.2h1.6V136.0h-1.6zM396.8 123.2h1.6V145.6h-1.6zM398.4 123.2h1.6V136.0h-1.6zM400.0 123.2h1.6V136.0h-1.6zM401.6 123.2h1.6V136.0h-1.6zM403.2 123.2h1.6V142.4h-1.6zM404.8 123.2h1.6V136.0h-1.6zM406.4 123.2h1.6V136.0h-1.6zM408.0 123.2h1.6V139.2h-1.6zM409.6 123.2h1.6V136.0h-1.6zM411.2 123.2h1.6V136.0h-1.6zM412.8 123.2h1.6V140.8h-1.6zM414.4 123.2h1.6V132.8h-1.6zM416.0 123.2h1.6V136.0h-1.6zM417.6 123.2h1.6V136.0h-1.6zM419.2 123.2h1.6V136.0h-1.6zM420.8 123.2h1.6V136.0h-1.6zM422.4 123.2h1.6V136.0h-1.6zM424.0 123.2h1.6V136.0h-1.6zM425.6 123.2h1.6V136.0h-1.6zM427.2 123.2h1.6V132.8h-1.6zM428.8 123.2h1.6V142.4h-1.6zM430.4 123.2h1.6V136.0h-1.6zM432.0 126.4h1.6V136.0h-1.6zM433.6 123.2h1.6V136.0h-1.6zM435.2 123.2h1.6V136.0h-1.6zM436.8 123.2h1.6V136.0h-1.6zM438.4 126.4h1.6V144.0h-1.6zM440.0 126.4h1.6V136.0h-1.6zM441.6 123.2h1.6V136.0h-1.6zM443.2 126.4h1.6V136.0h-1.6zM444.8 123.2h1.6V136.0h-1.6zM446.4 123.2h1.6V136.0h-1.6zM448.0 126.4h1.6V136.0h-1.6zM449.6 123.2h1.6V136.0h-1.6zM451.2 123.2h1.6V136.0h-1.6zM452.8 126.4h1.6V140.8h-1.6zM454.4 123.2h1.6V136.0h-1.6zM456.0 126.4h1.6V136.0h-1.6zM646.4 126.4h1.6V136.0h-1.6zM648.0 123.2h1.6V136.0h-1.6zM649.6 123.2h1.6V136.0h-1.6zM651.2 123.2h1.6V136.0h-1.6zM652.8 123.2h1.6V136.0h-1.6zM654.4 126.4h1.6V136.0h-1.6zM656.0 123.2h1.6V140.8h-1.6zM657.6 123.2h1.6V136.0h-1.6zM659.2 123.2h1.6V136.0h-1.6zM660.8 123.2h1.6V136.0h-1.6zM662.4 123.2h1.6V136.0h-1.6zM664.0 123.2h1.6V136.0h-1.6zM665.6 126.4h1.6V136.0h-1.6zM667.2 126.4h1.6V136.0h-1.6zM668.8 123.2h1.6V136.0h-1.6zM670.4 123.2h1.6V139.2h-1.6zM672.0 123.2h1.6V145.6h-1.6zM673.6 126.4h1.6V144.0h-1.6zM675.2 126.4h1.6V139.2h-1.6zM676.8 123.2h1.6V140.8h-1.6zM678.4 126.4h1.6V136.0h-1.6zM680.0 123.2h1.6V136.0h-1.6zM681.6 123.2h1.6V144.0h-1.6zM683.2 123.2h1.6V136.0h-1.6zM684.8 123.2h1.6V136.0h-1.6zM686.4 123.2h1.6V136.0h-1.6zM688.0 123.2h1.6V136.0h-1.6zM689.6 123.2h1.6V136.0h-1.6zM691.2 123.2h1.6V136.0h-1.6zM692.8 123.2h1.6V142.4h-1.6zM694.4 123.2h1.6V136.0h-1.6zM696.0 123.2h1.6V136.0h-1.6zM697.6 123.2h1.6V136.0h-1.6zM699.2 123.2h1.6V136.0h-1.6zM700.8 123.2h1.6V136.0h-1.6zM702.4 123.2h1.6V136.0h-1.6zM704.0 123.2h1.6V136.0h-1.6zM705.6 123.2h1.6V136.0h-1.6zM707.2 123.2h1.6V136.0h-1.6zM708.8 123.2h1.6V136.0h-1.6zM710.4 126.4h1.6V136.0h-1.6zM712.0 123.2h1.6V136.0h-1.6zM713.6 123.2h1.6V145.6h-1.6zM715.2 126.4h1.6V136.0h-1.6zM716.8 126.4h1.6V136.0h-1.6zM718.4 123.2h1.6V136.0h-1.6zM720.0 123.2h1.6V136.0h-1.6zM721.6 126.4h1.6V136.0h-1.6zM723.2 126.4h1.6V136.0h-1.6zM724.8 123.2h1.6V136.0h-1.6zM726.4 123.2h1.6V136.0h-1.6zM728.0 123.2h1.6V136.0h-1.6zM729.6 126.4h1.6V136.0h-1.6zM731.2 123.2h1.6V144.0h-1.6zM732.8 126.4h1.6V136.0h-1.6zM734.4 123.2h1.6V136.0h-1.6zM736.0 123.2h1.6V136.0h-1.6zM737.6 123.2h1.6V136.0h-1.6zM739.2 123.2h1.6V139.2h-1.6zM740.8 123.2h1.6V136.0h-1.6zM742.4 123.2h1.6V139.2h-1.6zM744.0 126.4h1.6V139.2h-1.6zM745.6 123.2h1.6V136.0h-1.6zM747.2 126.4h1.6V144.0h-1.6zM748.8 123.2h1.6V144.0h-1.6zM750.4 123.2h1.6V136.0h-1.6zM752.0 123.2h1.6V136.0h-1.6zM753.6 123.2h1.6V142.4h-1.6zM755.2 123.2h1.6V136.0h-1.6zM756.8 123.2h1.6V145.6h-1.6zM758.4 123.2h1.6V136.0h-1.6zM760.0 126.4h1.6V136.0h-1.6zM761.6 123.2h1.6V136.0h-1.6zM763.2 123.2h1.6V136.0h-1.6zM764.8 123.2h1.6V136.0h-1.6zM766.4 123.2h1.6V136.0h-1.6zM768.0 126.4h1.6V136.0h-1.6zM769.6 123.2h1.6V136.0h-1.6zM771.2 123.2h1.6V136.0h-1.6zM772.8 123.2h1.6V136.0h-1.6zM774.4 123.2h1.6V139.2h-1.6zM776.0 123.2h1.6V136.0h-1.6zM777.6 126.4h1.6V136.0h-1.6zM779.2 123.2h1.6V144.0h-1.6zM780.8 123.2h1.6V136.0h-1.6zM782.4 126.4h1.6V136.0h-1.6zM784.0 123.2h1.6V136.0h-1.6zM785.6 126.4h1.6V136.0h-1.6zM787.2 123.2h1.6V136.0h-1.6zM788.8 123.2h1.6V136.0h-1.6zM790.4 123.2h1.6V136.0h-1.6zM980.8 123.2h1.6V136.0h-1.6zM982.4 123.2h1.6V136.0h-1.6zM984.0 123.2h1.6V136.0h-1.6zM985.6 123.2h1.6V144.0h-1.6zM987.2 126.4h1.6V136.0h-1.6zM988.8 126.4h1.6V136.0h-1.6zM990.4 123.2h1.6V136.0h-1.6zM992.0 123.2h1.6V136.0h-1.6zM993.6 126.4h1.6V139.2h-1.6zM995.2 126.4h1.6V136.0h-1.6zM996.8 123.2h1.6V132.8h-1.6zM998.4 123.2h1.6V136.0h-1.6zM1000.0 123.2h1.6V139.2h-1.6zM1001.6 123.2h1.6V144.0h-1.6zM1003.2 123.2h1.6V136.0h-1.6zM1004.8 126.4h1.6V136.0h-1.6zM1006.4 126.4h1.6V136.0h-1.6zM1008.0 123.2h1.6V136.0h-1.6zM1009.6 123.2h1.6V136.0h-1.6zM1011.2 123.2h1.6V136.0h-1.6zM1012.8 123.2h1.6V142.4h-1.6zM1014.4 126.4h1.6V136.0h-1.6zM1016.0 123.2h1.6V136.0h-1.6zM1017.6 123.2h1.6V136.0h-1.6zM1019.2 123.2h1.6V139.2h-1.6zM1020.8 123.2h1.6V139.2h-1.6zM1022.4 126.4h1.6V136.0h-1.6zM1024.0 123.2h1.6V140.8h-1.6zM1025.6 123.2h1.6V136.0h-1.6zM1027.2 123.2h1.6V132.8h-1.6zM1028.8 123.2h1.6V145.6h-1.6zM1030.4 123.2h1.6V136.0h-1.6zM1032.0 126.4h1.6V136.0h-1.6zM1033.6 123.2h1.6V136.0h-1.6zM1035.2 123.2h1.6V136.0h-1.6zM1036.8 123.2h1.6V136.0h-1.6zM1038.4 123.2h1.6V136.0h-1.6zM1040.0 123.2h1.6V144.0h-1.6zM1041.6 123.2h1.6V144.0h-1.6zM1043.2 123.2h1.6V136.0h-1.6zM1044.8 126.4h1.6V136.0h-1.6zM1046.4 123.2h1.6V144.0h-1.6zM1048.0 126.4h1.6V136.0h-1.6zM1049.6 123.2h1.6V136.0h-1.6zM1051.2 126.4h1.6V136.0h-1.6zM1052.8 123.2h1.6V136.0h-1.6zM1054.4 123.2h1.6V144.0h-1.6zM1056.0 123.2h1.6V136.0h-1.6zM1057.6 121.6h1.6V136.0h-1.6zM1059.2 126.4h1.6V136.0h-1.6zM1060.8 126.4h1.6V132.8h-1.6zM1062.4 123.2h1.6V136.0h-1.6zM1064.0 126.4h1.6V136.0h-1.6zM1065.6 123.2h1.6V144.0h-1.6zM1067.2 123.2h1.6V136.0h-1.6zM1068.8 123.2h1.6V144.0h-1.6zM1070.4 123.2h1.6V144.0h-1.6zM1072.0 123.2h1.6V140.8h-1.6zM1073.6 123.2h1.6V136.0h-1.6zM1075.2 123.2h1.6V136.0h-1.6zM1076.8 123.2h1.6V136.0h-1.6zM1078.4 123.2h1.6V136.0h-1.6zM1080.0 123.2h1.6V136.0h-1.6zM1081.6 126.4h1.6V136.0h-1.6zM1083.2 126.4h1.6V142.4h-1.6zM1084.8 123.2h1.6V136.0h-1.6zM1086.4 123.2h1.6V136.0h-1.6zM1088.0 123.2h1.6V136.0h-1.6zM1089.6 126.4h1.6V136.0h-1.6zM1091.2 123.2h1.6V136.0h-1.6zM1092.8 123.2h1.6V136.0h-1.6zM1094.4 123.2h1.6V136.0h-1.6zM1096.0 123.2h1.6V136.0h-1.6zM1097.6 126.4h1.6V136.0h-1.6zM1099.2 126.4h1.6V136.0h-1.6zM1100.8 126.4h1.6V136.0h-1.6zM1102.4 126.4h1.6V136.0h-1.6zM1104.0 123.2h1.6V136.0h-1.6zM1105.6 123.2h1.6V136.0h-1.6zM1107.2 126.4h1.6V136.0h-1.6zM1108.8 123.2h1.6V136.0h-1.6zM1110.4 123.2h1.6V136.0h-1.6zM1112.0 123.2h1.6V136.0h-1.6zM1113.6 126.4h1.6V136.0h-1.6zM1115.2 123.2h1.6V136.0h-1.6zM1116.8 123.2h1.6V136.0h-1.6zM1118.4 123.2h1.6V136.0h-1.6zM1120.0 123.2h1.6V136.0h-1.6zM1121.6 126.4h1.6V139.2h-1.6zM1123.2 123.2h1.6V136.0h-1.6zM1124.8 123.2h1.6V136.0h-1.6zM1126.4 126.4h1.6V136.0h-1.6zM129.6 340.8h1.6V353.6h-1.6zM131.2 344.0h1.6V353.6h-1.6zM132.8 344.0h1.6V350.4h-1.6zM134.4 344.0h1.6V353.6h-1.6zM136.0 344.0h1.6V356.8h-1.6zM137.6 344.0h1.6V353.6h-1.6zM139.2 337.6h1.6V353.6h-1.6zM140.8 344.0h1.6V353.6h-1.6zM142.4 344.0h1.6V353.6h-1.6zM144.0 344.0h1.6V353.6h-1.6zM145.6 344.0h1.6V353.6h-1.6zM147.2 344.0h1.6V356.8h-1.6zM148.8 344.0h1.6V353.6h-1.6zM150.4 344.0h1.6V353.6h-1.6zM152.0 344.0h1.6V353.6h-1.6zM153.6 344.0h1.6V353.6h-1.6zM155.2 344.0h1.6V353.6h-1.6zM156.8 344.0h1.6V356.8h-1.6zM158.4 344.0h1.6V353.6h-1.6zM160.0 344.0h1.6V353.6h-1.6zM161.6 344.0h1.6V356.8h-1.6zM163.2 339.2h1.6V353.6h-1.6zM164.8 344.0h1.6V353.6h-1.6zM166.4 340.8h1.6V353.6h-1.6zM168.0 344.0h1.6V353.6h-1.6zM169.6 344.0h1.6V353.6h-1.6zM171.2 344.0h1.6V356.8h-1.6zM172.8 344.0h1.6V353.6h-1.6zM174.4 344.0h1.6V353.6h-1.6zM176.0 344.0h1.6V353.6h-1.6zM177.6 344.0h1.6V353.6h-1.6zM179.2 344.0h1.6V350.4h-1.6zM180.8 344.0h1.6V353.6h-1.6zM182.4 344.0h1.6V353.6h-1.6zM184.0 344.0h1.6V353.6h-1.6zM185.6 344.0h1.6V356.8h-1.6zM187.2 340.8h1.6V353.6h-1.6zM188.8 344.0h1.6V356.8h-1.6zM190.4 344.0h1.6V356.8h-1.6zM192.0 347.2h1.6V353.6h-1.6zM193.6 344.0h1.6V353.6h-1.6zM195.2 339.2h1.6V353.6h-1.6zM196.8 344.0h1.6V356.8h-1.6zM198.4 344.0h1.6V353.6h-1.6zM200.0 344.0h1.6V353.6h-1.6zM201.6 344.0h1.6V356.8h-1.6zM203.2 340.8h1.6V353.6h-1.6zM204.8 340.8h1.6V353.6h-1.6zM206.4 344.0h1.6V353.6h-1.6zM208.0 344.0h1.6V356.8h-1.6zM209.6 339.2h1.6V353.6h-1.6zM211.2 344.0h1.6V353.6h-1.6zM212.8 344.0h1.6V353.6h-1.6zM214.4 344.0h1.6V353.6h-1.6zM216.0 344.0h1.6V353.6h-1.6zM217.6 344.0h1.6V353.6h-1.6zM219.2 344.0h1.6V356.8h-1.6zM220.8 344.0h1.6V353.6h-1.6zM222.4 340.8h1.6V353.6h-1.6zM224.0 340.8h1.6V353.6h-1.6zM225.6 344.0h1.6V353.6h-1.6zM227.2 344.0h1.6V353.6h-1.6zM228.8 344.0h1.6V353.6h-1.6zM230.4 344.0h1.6V353.6h-1.6zM232.0 344.0h1.6V353.6h-1.6zM233.6 344.0h1.6V353.6h-1.6zM235.2 344.0h1.6V353.6h-1.6zM236.8 344.0h1.6V356.8h-1.6zM238.4 344.0h1.6V353.6h-1.6zM240.0 344.0h1.6V353.6h-1.6zM241.6 344.0h1.6V356.8h-1.6zM243.2 344.0h1.6V353.6h-1.6zM244.8 337.6h1.6V353.6h-1.6zM246.4 344.0h1.6V356.8h-1.6zM248.0 337.6h1.6V353.6h-1.6zM249.6 344.0h1.6V353.6h-1.6zM251.2 344.0h1.6V356.8h-1.6zM252.8 339.2h1.6V356.8h-1.6zM254.4 340.8h1.6V353.6h-1.6zM256.0 344.0h1.6V353.6h-1.6zM257.6 344.0h1.6V353.6h-1.6zM259.2 344.0h1.6V353.6h-1.6zM260.8 344.0h1.6V353.6h-1.6zM262.4 344.0h1.6V353.6h-1.6zM264.0 344.0h1.6V353.6h-1.6zM265.6 344.0h1.6V356.8h-1.6zM267.2 344.0h1.6V353.6h-1.6zM268.8 344.0h1.6V353.6h-1.6zM270.4 344.0h1.6V353.6h-1.6zM272.0 344.0h1.6V353.6h-1.6zM273.6 344.0h1.6V356.8h-1.6zM275.2 347.2h1.6V353.6h-1.6zM276.8 344.0h1.6V353.6h-1.6zM278.4 337.6h1.6V353.6h-1.6zM280.0 344.0h1.6V353.6h-1.6zM281.6 344.0h1.6V353.6h-1.6zM283.2 339.2h1.6V353.6h-1.6zM284.8 344.0h1.6V353.6h-1.6zM286.4 344.0h1.6V356.8h-1.6zM288.0 347.2h1.6V353.6h-1.6zM289.6 344.0h1.6V353.6h-1.6zM291.2 339.2h1.6V353.6h-1.6zM292.8 339.2h1.6V353.6h-1.6zM294.4 344.0h1.6V356.8h-1.6zM296.0 344.0h1.6V353.6h-1.6zM297.6 344.0h1.6V353.6h-1.6zM299.2 344.0h1.6V356.8h-1.6zM300.8 337.6h1.6V356.8h-1.6zM460.8 344.0h1.6V353.6h-1.6zM462.4 340.8h1.6V350.4h-1.6zM464.0 344.0h1.6V356.8h-1.6zM465.6 344.0h1.6V353.6h-1.6zM467.2 344.0h1.6V356.8h-1.6zM468.8 344.0h1.6V356.8h-1.6zM470.4 344.0h1.6V353.6h-1.6zM472.0 344.0h1.6V353.6h-1.6zM473.6 344.0h1.6V353.6h-1.6zM475.2 344.0h1.6V356.8h-1.6zM476.8 344.0h1.6V356.8h-1.6zM478.4 344.0h1.6V353.6h-1.6zM480.0 344.0h1.6V353.6h-1.6zM481.6 344.0h1.6V356.8h-1.6zM483.2 344.0h1.6V356.8h-1.6zM484.8 344.0h1.6V356.8h-1.6zM486.4 344.0h1.6V353.6h-1.6zM488.0 337.6h1.6V353.6h-1.6zM489.6 344.0h1.6V353.6h-1.6zM491.2 344.0h1.6V353.6h-1.6zM492.8 337.6h1.6V356.8h-1.6zM494.4 337.6h1.6V353.6h-1.6zM496.0 344.0h1.6V350.4h-1.6zM497.6 344.0h1.6V356.8h-1.6zM499.2 344.0h1.6V353.6h-1.6zM500.8 344.0h1.6V353.6h-1.6zM502.4 344.0h1.6V353.6h-1.6zM504.0 339.2h1.6V353.6h-1.6zM505.6 344.0h1.6V356.8h-1.6zM507.2 339.2h1.6V353.6h-1.6zM508.8 344.0h1.6V353.6h-1.6zM510.4 344.0h1.6V353.6h-1.6zM512.0 344.0h1.6V356.8h-1.6zM513.6 339.2h1.6V353.6h-1.6zM515.2 344.0h1.6V353.6h-1.6zM516.8 337.6h1.6V353.6h-1.6zM518.4 344.0h1.6V353.6h-1.6zM520.0 344.0h1.6V356.8h-1.6zM521.6 344.0h1.6V353.6h-1.6zM523.2 344.0h1.6V353.6h-1.6zM524.8 344.0h1.6V356.8h-1.6zM526.4 344.0h1.6V353.6h-1.6zM528.0 344.0h1.6V353.6h-1.6zM529.6 344.0h1.6V356.8h-1.6zM531.2 344.0h1.6V353.6h-1.6zM532.8 344.0h1.6V353.6h-1.6zM534.4 344.0h1.6V353.6h-1.6zM536.0 344.0h1.6V353.6h-1.6zM537.6 337.6h1.6V353.6h-1.6zM539.2 344.0h1.6V353.6h-1.6zM540.8 344.0h1.6V350.4h-1.6zM542.4 344.0h1.6V353.6h-1.6zM544.0 344.0h1.6V356.8h-1.6zM545.6 344.0h1.6V353.6h-1.6zM547.2 344.0h1.6V353.6h-1.6zM548.8 344.0h1.6V353.6h-1.6zM550.4 344.0h1.6V353.6h-1.6zM552.0 344.0h1.6V356.8h-1.6zM553.6 344.0h1.6V356.8h-1.6zM555.2 337.6h1.6V353.6h-1.6zM556.8 344.0h1.6V353.6h-1.6zM558.4 344.0h1.6V353.6h-1.6zM560.0 340.8h1.6V353.6h-1.6zM561.6 344.0h1.6V353.6h-1.6zM563.2 344.0h1.6V353.6h-1.6zM564.8 344.0h1.6V353.6h-1.6zM566.4 344.0h1.6V356.8h-1.6zM568.0 344.0h1.6V353.6h-1.6zM569.6 344.0h1.6V356.8h-1.6zM571.2 344.0h1.6V353.6h-1.6zM572.8 337.6h1.6V353.6h-1.6zM574.4 344.0h1.6V356.8h-1.6zM576.0 344.0h1.6V356.8h-1.6zM577.6 340.8h1.6V353.6h-1.6zM579.2 344.0h1.6V353.6h-1.6zM580.8 344.0h1.6V356.8h-1.6zM582.4 344.0h1.6V353.6h-1.6zM584.0 344.0h1.6V353.6h-1.6zM585.6 339.2h1.6V356.8h-1.6zM587.2 344.0h1.6V356.8h-1.6zM588.8 344.0h1.6V356.8h-1.6zM590.4 337.6h1.6V353.6h-1.6zM592.0 344.0h1.6V356.8h-1.6zM593.6 344.0h1.6V353.6h-1.6zM595.2 344.0h1.6V353.6h-1.6zM596.8 347.2h1.6V356.8h-1.6zM598.4 344.0h1.6V353.6h-1.6zM600.0 344.0h1.6V356.8h-1.6zM601.6 337.6h1.6V356.8h-1.6zM603.2 344.0h1.6V356.8h-1.6zM604.8 344.0h1.6V356.8h-1.6zM606.4 344.0h1.6V353.6h-1.6zM608.0 344.0h1.6V353.6h-1.6zM609.6 339.2h1.6V353.6h-1.6zM611.2 339.2h1.6V353.6h-1.6zM612.8 344.0h1.6V353.6h-1.6zM614.4 344.0h1.6V356.8h-1.6zM616.0 337.6h1.6V353.6h-1.6zM617.6 337.6h1.6V353.6h-1.6zM619.2 344.0h1.6V350.4h-1.6zM620.8 339.2h1.6V356.8h-1.6zM622.4 344.0h1.6V353.6h-1.6zM624.0 344.0h1.6V356.8h-1.6zM625.6 344.0h1.6V353.6h-1.6zM627.2 344.0h1.6V356.8h-1.6zM628.8 344.0h1.6V353.6h-1.6zM630.4 344.0h1.6V353.6h-1.6zM632.0 344.0h1.6V353.6h-1.6zM633.6 340.8h1.6V353.6h-1.6zM635.2 339.2h1.6V353.6h-1.6zM796.8 344.0h1.6V356.8h-1.6zM798.4 344.0h1.6V353.6h-1.6zM800.0 340.8h1.6V356.8h-1.6zM801.6 344.0h1.6V353.6h-1.6zM803.2 344.0h1.6V353.6h-1.6zM804.8 344.0h1.6V353.6h-1.6zM806.4 344.0h1.6V353.6h-1.6zM808.0 344.0h1.6V353.6h-1.6zM809.6 344.0h1.6V353.6h-1.6zM811.2 344.0h1.6V356.8h-1.6zM812.8 344.0h1.6V353.6h-1.6zM814.4 344.0h1.6V353.6h-1.6zM816.0 344.0h1.6V353.6h-1.6zM817.6 344.0h1.6V353.6h-1.6zM819.2 344.0h1.6V353.6h-1.6zM820.8 344.0h1.6V353.6h-1.6zM822.4 344.0h1.6V350.4h-1.6zM824.0 344.0h1.6V356.8h-1.6zM825.6 344.0h1.6V353.6h-1.6zM827.2 344.0h1.6V353.6h-1.6zM828.8 344.0h1.6V350.4h-1.6zM830.4 340.8h1.6V353.6h-1.6zM832.0 344.0h1.6V353.6h-1.6zM833.6 344.0h1.6V353.6h-1.6zM835.2 344.0h1.6V353.6h-1.6zM836.8 337.6h1.6V353.6h-1.6zM838.4 344.0h1.6V353.6h-1.6zM840.0 344.0h1.6V353.6h-1.6zM841.6 344.0h1.6V353.6h-1.6zM843.2 344.0h1.6V353.6h-1.6zM844.8 344.0h1.6V353.6h-1.6zM846.4 344.0h1.6V356.8h-1.6zM848.0 340.8h1.6V356.8h-1.6zM849.6 344.0h1.6V353.6h-1.6zM851.2 340.8h1.6V353.6h-1.6zM852.8 344.0h1.6V353.6h-1.6zM854.4 344.0h1.6V353.6h-1.6zM856.0 344.0h1.6V353.6h-1.6zM857.6 344.0h1.6V353.6h-1.6zM859.2 344.0h1.6V356.8h-1.6zM860.8 344.0h1.6V353.6h-1.6zM862.4 344.0h1.6V356.8h-1.6zM864.0 344.0h1.6V353.6h-1.6zM865.6 344.0h1.6V350.4h-1.6zM867.2 344.0h1.6V356.8h-1.6zM868.8 344.0h1.6V353.6h-1.6zM870.4 344.0h1.6V353.6h-1.6zM872.0 344.0h1.6V353.6h-1.6zM873.6 344.0h1.6V353.6h-1.6zM875.2 344.0h1.6V353.6h-1.6zM876.8 344.0h1.6V353.6h-1.6zM878.4 344.0h1.6V353.6h-1.6zM880.0 344.0h1.6V353.6h-1.6zM881.6 344.0h1.6V356.8h-1.6zM883.2 339.2h1.6V356.8h-1.6zM884.8 344.0h1.6V353.6h-1.6zM886.4 344.0h1.6V353.6h-1.6zM888.0 344.0h1.6V353.6h-1.6zM889.6 344.0h1.6V353.6h-1.6zM891.2 337.6h1.6V353.6h-1.6zM892.8 344.0h1.6V353.6h-1.6zM894.4 337.6h1.6V353.6h-1.6zM896.0 344.0h1.6V353.6h-1.6zM897.6 339.2h1.6V353.6h-1.6zM899.2 344.0h1.6V353.6h-1.6zM900.8 344.0h1.6V353.6h-1.6zM902.4 344.0h1.6V353.6h-1.6zM904.0 339.2h1.6V353.6h-1.6zM905.6 344.0h1.6V353.6h-1.6zM907.2 340.8h1.6V353.6h-1.6zM908.8 344.0h1.6V353.6h-1.6zM910.4 347.2h1.6V356.8h-1.6zM912.0 344.0h1.6V356.8h-1.6zM913.6 344.0h1.6V350.4h-1.6zM915.2 344.0h1.6V353.6h-1.6zM916.8 344.0h1.6V353.6h-1.6zM918.4 340.8h1.6V353.6h-1.6zM920.0 344.0h1.6V353.6h-1.6zM921.6 344.0h1.6V356.8h-1.6zM923.2 344.0h1.6V353.6h-1.6zM924.8 344.0h1.6V353.6h-1.6zM926.4 347.2h1.6V353.6h-1.6zM928.0 344.0h1.6V353.6h-1.6zM929.6 344.0h1.6V353.6h-1.6zM931.2 344.0h1.6V356.8h-1.6zM932.8 344.0h1.6V353.6h-1.6zM934.4 344.0h1.6V350.4h-1.6zM936.0 340.8h1.6V353.6h-1.6zM937.6 344.0h1.6V353.6h-1.6zM939.2 344.0h1.6V353.6h-1.6zM940.8 344.0h1.6V353.6h-1.6zM942.4 344.0h1.6V353.6h-1.6zM944.0 344.0h1.6V353.6h-1.6zM945.6 337.6h1.6V353.6h-1.6zM947.2 344.0h1.6V353.6h-1.6zM948.8 344.0h1.6V353.6h-1.6zM950.4 344.0h1.6V353.6h-1.6zM952.0 344.0h1.6V353.6h-1.6zM953.6 340.8h1.6V356.8h-1.6zM955.2 344.0h1.6V353.6h-1.6zM956.8 344.0h1.6V353.6h-1.6zM958.4 337.6h1.6V353.6h-1.6zM960.0 344.0h1.6V353.6h-1.6zM961.6 344.0h1.6V356.8h-1.6zM963.2 344.0h1.6V356.8h-1.6zM964.8 344.0h1.6V356.8h-1.6zM966.4 344.0h1.6V353.6h-1.6zM968.0 344.0h1.6V356.8h-1.6zM969.6 344.0h1.6V353.6h-1.6zM1132.8 344.0h1.6V353.6h-1.6zM1134.4 337.6h1.6V356.8h-1.6zM1136.0 344.0h1.6V353.6h-1.6zM1137.6 344.0h1.6V356.8h-1.6zM1139.2 339.2h1.6V356.8h-1.6zM1140.8 344.0h1.6V356.8h-1.6zM1142.4 339.2h1.6V353.6h-1.6zM1144.0 340.8h1.6V353.6h-1.6zM1145.6 344.0h1.6V353.6h-1.6zM1147.2 344.0h1.6V356.8h-1.6zM1148.8 337.6h1.6V353.6h-1.6zM1150.4 344.0h1.6V353.6h-1.6zM1152.0 344.0h1.6V353.6h-1.6zM1153.6 340.8h1.6V353.6h-1.6zM1155.2 344.0h1.6V356.8h-1.6zM1156.8 344.0h1.6V353.6h-1.6zM1158.4 339.2h1.6V356.8h-1.6zM1160.0 337.6h1.6V353.6h-1.6zM1161.6 344.0h1.6V356.8h-1.6zM1163.2 344.0h1.6V356.8h-1.6zM1164.8 344.0h1.6V353.6h-1.6zM1166.4 344.0h1.6V356.8h-1.6zM1168.0 344.0h1.6V353.6h-1.6zM1169.6 344.0h1.6V356.8h-1.6zM1171.2 344.0h1.6V353.6h-1.6zM1172.8 344.0h1.6V353.6h-1.6zM1174.4 344.0h1.6V353.6h-1.6zM1176.0 344.0h1.6V353.6h-1.6zM1177.6 344.0h1.6V353.6h-1.6zM1179.2 344.0h1.6V353.6h-1.6zM1180.8 344.0h1.6V353.6h-1.6zM1182.4 344.0h1.6V356.8h-1.6zM1184.0 339.2h1.6V356.8h-1.6zM1185.6 344.0h1.6V353.6h-1.6zM1187.2 344.0h1.6V356.8h-1.6zM1188.8 344.0h1.6V353.6h-1.6zM1190.4 344.0h1.6V353.6h-1.6zM1192.0 344.0h1.6V353.6h-1.6zM1193.6 344.0h1.6V353.6h-1.6zM1195.2 340.8h1.6V353.6h-1.6zM1196.8 337.6h1.6V353.6h-1.6zM1198.4 340.8h1.6V356.8h-1.6zM1200.0 344.0h1.6V353.6h-1.6zM1201.6 340.8h1.6V356.8h-1.6zM1203.2 344.0h1.6V356.8h-1.6zM1204.8 344.0h1.6V353.6h-1.6zM1206.4 344.0h1.6V356.8h-1.6zM1208.0 344.0h1.6V353.6h-1.6zM1209.6 347.2h1.6V353.6h-1.6zM1211.2 340.8h1.6V353.6h-1.6zM1212.8 344.0h1.6V353.6h-1.6zM1214.4 344.0h1.6V353.6h-1.6zM1216.0 344.0h1.6V353.6h-1.6zM1217.6 337.6h1.6V353.6h-1.6zM1219.2 340.8h1.6V353.6h-1.6zM1220.8 337.6h1.6V353.6h-1.6zM1222.4 344.0h1.6V356.8h-1.6zM1224.0 337.6h1.6V353.6h-1.6zM1225.6 344.0h1.6V356.8h-1.6zM1227.2 344.0h1.6V353.6h-1.6zM1228.8 344.0h1.6V353.6h-1.6zM1230.4 344.0h1.6V353.6h-1.6zM1232.0 344.0h1.6V353.6h-1.6zM1233.6 344.0h1.6V353.6h-1.6zM1235.2 340.8h1.6V353.6h-1.6zM1236.8 337.6h1.6V356.8h-1.6zM1238.4 344.0h1.6V356.8h-1.6zM1240.0 344.0h1.6V353.6h-1.6zM1241.6 340.8h1.6V356.8h-1.6zM1243.2 344.0h1.6V353.6h-1.6zM1244.8 344.0h1.6V353.6h-1.6zM1246.4 344.0h1.6V353.6h-1.6zM1248.0 344.0h1.6V353.6h-1.6zM1249.6 344.0h1.6V353.6h-1.6zM1251.2 344.0h1.6V353.6h-1.6z" fill="#ffff00"/>
<path d="M122.4 126.0 L123.2 250.0 L124.9 322.0 L126.0 334.0 L127.5 341.0 L130.0 346.0 L134.0 349.0" fill="none" stroke="#ffff00" stroke-width="3.3" stroke-linejoin="round"/>
<path d="M300.5 350.0 L301.0 300.0 L303.0 250.0 L305.5 195.0 L307.5 165.0 L309.5 148.0 L311.5 138.0 L314.0 130.0 L316.0 126.0" fill="none" stroke="#ffff00" stroke-width="3.3" stroke-linejoin="round"/>
<path d="M457.2 126.0 L457.5 200.0 L458.3 260.0 L459.3 318.0 L460.5 332.0 L462.0 340.0 L465.0 346.0 L468.0 349.0" fill="none" stroke="#ffff00" stroke-width="3.3" stroke-linejoin="round"/>
<path d="M635.4 350.0 L637.2 290.0 L638.0 250.0 L639.8 210.0 L641.8 175.0 L643.3 150.0 L645.5 139.0 L648.0 131.0 L650.0 126.0" fill="none" stroke="#ffff00" stroke-width="3.3" stroke-linejoin="round"/>
<path d="M790.8 126.0 L791.5 200.0 L793.0 260.0 L794.0 318.0 L795.5 331.0 L797.5 340.0 L800.0 346.0 L803.0 349.0" fill="none" stroke="#ffff00" stroke-width="3.3" stroke-linejoin="round"/>
<path d="M969.5 350.0 L970.5 300.0 L972.8 245.0 L974.3 200.0 L977.0 160.0 L979.5 145.0 L981.5 135.0 L983.5 128.0 L985.0 126.0" fill="none" stroke="#ffff00" stroke-width="3.3" stroke-linejoin="round"/>
<path d="M1126.2 126.0 L1126.5 230.0 L1127.4 280.0 L1128.3 322.0 L1129.5 334.0 L1131.0 341.0 L1134.0 346.0 L1138.0 349.0" fill="none" stroke="#ffff00" stroke-width="3.3" stroke-linejoin="round"/>
<path d="M132.8 417.6h1.6V430.4h-1.6zM134.4 417.6h1.6V430.4h-1.6zM136.0 417.6h1.6V430.4h-1.6zM137.6 417.6h1.6V427.2h-1.6zM139.2 417.6h1.6V427.2h-1.6zM140.8 417.6h1.6V430.4h-1.6zM142.4 417.6h1.6V430.4h-1.6zM144.0 417.6h1.6V427.2h-1.6zM145.6 417.6h1.6V430.4h-1.6zM147.2 416.0h1.6V430.4h-1.6zM148.8 417.6h1.6V430.4h-1.6zM150.4 417.6h1.6V427.2h-1.6zM152.0 417.6h1.6V427.2h-1.6zM153.6 417.6h1.6V430.4h-1.6zM155.2 417.6h1.6V430.4h-1.6zM156.8 417.6h1.6V427.2h-1.6zM158.4 417.6h1.6V430.4h-1.6zM160.0 417.6h1.6V430.4h-1.6zM161.6 417.6h1.6V430.4h-1.6zM163.2 417.6h1.6V430.4h-1.6zM164.8 417.6h1.6V427.2h-1.6zM166.4 417.6h1.6V430.4h-1.6zM168.0 417.6h1.6V430.4h-1.6zM169.6 417.6h1.6V430.4h-1.6zM171.2 417.6h1.6V430.4h-1.6zM172.8 417.6h1.6V430.4h-1.6zM174.4 417.6h1.6V430.4h-1.6zM176.0 417.6h1.6V430.4h-1.6zM177.6 417.6h1.6V430.4h-1.6zM179.2 417.6h1.6V430.4h-1.6zM180.8 417.6h1.6V430.4h-1.6zM182.4 416.0h1.6V427.2h-1.6zM184.0 417.6h1.6V430.4h-1.6zM185.6 417.6h1.6V430.4h-1.6zM187.2 417.6h1.6V430.4h-1.6zM188.8 417.6h1.6V430.4h-1.6zM190.4 417.6h1.6V430.4h-1.6zM192.0 417.6h1.6V430.4h-1.6zM193.6 417.6h1.6V427.2h-1.6zM195.2 417.6h1.6V430.4h-1.6zM196.8 417.6h1.6V430.4h-1.6zM198.4 417.6h1.6V430.4h-1.6zM200.0 417.6h1.6V427.2h-1.6zM201.6 417.6h1.6V427.2h-1.6zM203.2 417.6h1.6V427.2h-1.6zM204.8 417.6h1.6V427.2h-1.6zM206.4 417.6h1.6V430.4h-1.6zM208.0 420.8h1.6V430.4h-1.6zM209.6 417.6h1.6V430.4h-1.6zM211.2 417.6h1.6V430.4h-1.6zM212.8 417.6h1.6V430.4h-1.6zM214.4 417.6h1.6V430.4h-1.6zM216.0 417.6h1.6V430.4h-1.6zM217.6 417.6h1.6V430.4h-1.6zM219.2 417.6h1.6V430.4h-1.6zM220.8 420.8h1.6V430.4h-1.6zM222.4 417.6h1.6V432.0h-1.6zM224.0 417.6h1.6V430.4h-1.6zM225.6 417.6h1.6V430.4h-1.6zM227.2 417.6h1.6V430.4h-1.6zM228.8 417.6h1.6V430.4h-1.6zM230.4 417.6h1.6V430.4h-1.6zM232.0 417.6h1.6V427.2h-1.6zM233.6 417.6h1.6V430.4h-1.6zM235.2 417.6h1.6V430.4h-1.6zM236.8 417.6h1.6V430.4h-1.6zM238.4 416.0h1.6V430.4h-1.6zM240.0 417.6h1.6V430.4h-1.6zM241.6 417.6h1.6V430.4h-1.6zM243.2 417.6h1.6V427.2h-1.6zM244.8 417.6h1.6V430.4h-1.6zM246.4 417.6h1.6V427.2h-1.6zM248.0 417.6h1.6V430.4h-1.6zM249.6 416.0h1.6V430.4h-1.6zM251.2 417.6h1.6V430.4h-1.6zM252.8 417.6h1.6V430.4h-1.6zM254.4 417.6h1.6V430.4h-1.6zM256.0 417.6h1.6V427.2h-1.6zM257.6 417.6h1.6V430.4h-1.6zM259.2 417.6h1.6V430.4h-1.6zM260.8 417.6h1.6V430.4h-1.6zM262.4 417.6h1.6V430.4h-1.6zM264.0 417.6h1.6V430.4h-1.6zM265.6 420.8h1.6V430.4h-1.6zM267.2 417.6h1.6V430.4h-1.6zM268.8 417.6h1.6V427.2h-1.6zM270.4 417.6h1.6V427.2h-1.6zM272.0 417.6h1.6V430.4h-1.6zM273.6 420.8h1.6V430.4h-1.6zM275.2 417.6h1.6V430.4h-1.6zM276.8 417.6h1.6V430.4h-1.6zM278.4 417.6h1.6V430.4h-1.6zM280.0 417.6h1.6V430.4h-1.6zM281.6 417.6h1.6V430.4h-1.6zM283.2 417.6h1.6V430.4h-1.6zM284.8 417.6h1.6V430.4h-1.6zM286.4 420.8h1.6V430.4h-1.6zM288.0 417.6h1.6V430.4h-1.6zM289.6 417.6h1.6V430.4h-1.6zM291.2 417.6h1.6V427.2h-1.6zM292.8 417.6h1.6V430.4h-1.6zM468.8 417.6h1.6V430.4h-1.6zM470.4 417.6h1.6V430.4h-1.6zM472.0 417.6h1.6V430.4h-1.6zM473.6 417.6h1.6V430.4h-1.6zM475.2 417.6h1.6V430.4h-1.6zM476.8 417.6h1.6V430.4h-1.6zM478.4 417.6h1.6V430.4h-1.6zM480.0 417.6h1.6V430.4h-1.6zM481.6 417.6h1.6V430.4h-1.6zM483.2 417.6h1.6V430.4h-1.6zM484.8 417.6h1.6V430.4h-1.6zM486.4 417.6h1.6V430.4h-1.6zM488.0 417.6h1.6V430.4h-1.6zM489.6 417.6h1.6V430.4h-1.6zM491.2 417.6h1.6V430.4h-1.6zM492.8 417.6h1.6V430.4h-1.6zM494.4 417.6h1.6V430.4h-1.6zM496.0 417.6h1.6V430.4h-1.6zM497.6 417.6h1.6V430.4h-1.6zM499.2 417.6h1.6V430.4h-1.6zM500.8 417.6h1.6V430.4h-1.6zM502.4 417.6h1.6V430.4h-1.6zM504.0 417.6h1.6V427.2h-1.6zM505.6 417.6h1.6V430.4h-1.6zM507.2 417.6h1.6V427.2h-1.6zM508.8 417.6h1.6V430.4h-1.6zM510.4 417.6h1.6V430.4h-1.6zM512.0 417.6h1.6V430.4h-1.6zM513.6 417.6h1.6V430.4h-1.6zM515.2 417.6h1.6V430.4h-1.6zM516.8 420.8h1.6V430.4h-1.6zM518.4 417.6h1.6V430.4h-1.6zM520.0 417.6h1.6V430.4h-1.6zM521.6 417.6h1.6V430.4h-1.6zM523.2 417.6h1.6V430.4h-1.6zM524.8 417.6h1.6V430.4h-1.6zM526.4 417.6h1.6V430.4h-1.6zM528.0 417.6h1.6V433.6h-1.6zM529.6 417.6h1.6V430.4h-1.6zM531.2 417.6h1.6V430.4h-1.6zM532.8 417.6h1.6V427.2h-1.6zM534.4 417.6h1.6V427.2h-1.6zM536.0 417.6h1.6V430.4h-1.6zM537.6 417.6h1.6V427.2h-1.6zM539.2 417.6h1.6V430.4h-1.6zM540.8 417.6h1.6V430.4h-1.6zM542.4 420.8h1.6V430.4h-1.6zM544.0 417.6h1.6V430.4h-1.6zM545.6 417.6h1.6V430.4h-1.6zM547.2 417.6h1.6V430.4h-1.6zM548.8 417.6h1.6V430.4h-1.6zM550.4 417.6h1.6V430.4h-1.6zM552.0 417.6h1.6V428.8h-1.6zM553.6 417.6h1.6V430.4h-1.6zM555.2 417.6h1.6V430.4h-1.6zM556.8 417.6h1.6V427.2h-1.6zM558.4 417.6h1.6V430.4h-1.6zM560.0 417.6h1.6V430.4h-1.6zM561.6 417.6h1.6V430.4h-1.6zM563.2 417.6h1.6V430.4h-1.6zM564.8 420.8h1.6V430.4h-1.6zM566.4 417.6h1.6V430.4h-1.6zM568.0 417.6h1.6V427.2h-1.6zM569.6 417.6h1.6V427.2h-1.6zM571.2 417.6h1.6V427.2h-1.6zM572.8 417.6h1.6V430.4h-1.6zM574.4 417.6h1.6V430.4h-1.6zM576.0 417.6h1.6V430.4h-1.6zM577.6 417.6h1.6V430.4h-1.6zM579.2 417.6h1.6V427.2h-1.6zM580.8 417.6h1.6V432.0h-1.6zM582.4 417.6h1.6V430.4h-1.6zM584.0 417.6h1.6V430.4h-1.6zM585.6 417.6h1.6V430.4h-1.6zM587.2 417.6h1.6V430.4h-1.6zM588.8 417.6h1.6V430.4h-1.6zM590.4 420.8h1.6V430.4h-1.6zM592.0 417.6h1.6V430.4h-1.6zM593.6 417.6h1.6V430.4h-1.6zM595.2 416.0h1.6V430.4h-1.6zM596.8 417.6h1.6V430.4h-1.6zM598.4 417.6h1.6V430.4h-1.6zM600.0 417.6h1.6V433.6h-1.6zM601.6 417.6h1.6V427.2h-1.6zM603.2 417.6h1.6V430.4h-1.6zM604.8 417.6h1.6V430.4h-1.6zM606.4 417.6h1.6V430.4h-1.6zM608.0 417.6h1.6V430.4h-1.6zM609.6 417.6h1.6V430.4h-1.6zM611.2 417.6h1.6V427.2h-1.6zM612.8 417.6h1.6V430.4h-1.6zM614.4 417.6h1.6V430.4h-1.6zM616.0 417.6h1.6V430.4h-1.6zM617.6 417.6h1.6V430.4h-1.6zM619.2 417.6h1.6V430.4h-1.6zM620.8 417.6h1.6V430.4h-1.6zM622.4 417.6h1.6V430.4h-1.6zM624.0 420.8h1.6V430.4h-1.6zM625.6 417.6h1.6V430.4h-1.6zM627.2 417.6h1.6V430.4h-1.6zM628.8 417.6h1.6V430.4h-1.6zM801.6 417.6h1.6V430.4h-1.6zM803.2 417.6h1.6V430.4h-1.6zM804.8 417.6h1.6V430.4h-1.6zM806.4 416.0h1.6V430.4h-1.6zM808.0 417.6h1.6V430.4h-1.6zM809.6 417.6h1.6V430.4h-1.6zM811.2 417.6h1.6V430.4h-1.6zM812.8 417.6h1.6V430.4h-1.6zM814.4 417.6h1.6V430.4h-1.6zM816.0 417.6h1.6V430.4h-1.6zM817.6 417.6h1.6V430.4h-1.6zM819.2 417.6h1.6V430.4h-1.6zM820.8 417.6h1.6V430.4h-1.6zM822.4 417.6h1.6V430.4h-1.6zM824.0 417.6h1.6V430.4h-1.6zM825.6 417.6h1.6V430.4h-1.6zM827.2 417.6h1.6V430.4h-1.6zM828.8 417.6h1.6V428.8h-1.6zM830.4 417.6h1.6V430.4h-1.6zM832.0 417.6h1.6V427.2h-1.6zM833.6 417.6h1.6V430.4h-1.6zM835.2 417.6h1.6V430.4h-1.6zM836.8 417.6h1.6V427.2h-1.6zM838.4 417.6h1.6V430.4h-1.6zM840.0 417.6h1.6V427.2h-1.6zM841.6 417.6h1.6V427.2h-1.6zM843.2 417.6h1.6V433.6h-1.6zM844.8 417.6h1.6V430.4h-1.6zM846.4 417.6h1.6V430.4h-1.6zM848.0 417.6h1.6V427.2h-1.6zM849.6 417.6h1.6V430.4h-1.6zM851.2 417.6h1.6V427.2h-1.6zM852.8 417.6h1.6V430.4h-1.6zM854.4 417.6h1.6V430.4h-1.6zM856.0 417.6h1.6V427.2h-1.6zM857.6 417.6h1.6V430.4h-1.6zM859.2 417.6h1.6V430.4h-1.6zM860.8 417.6h1.6V430.4h-1.6zM862.4 417.6h1.6V430.4h-1.6zM864.0 417.6h1.6V433.6h-1.6zM865.6 417.6h1.6V430.4h-1.6zM867.2 417.6h1.6V427.2h-1.6zM868.8 417.6h1.6V430.4h-1.6zM870.4 417.6h1.6V430.4h-1.6zM872.0 417.6h1.6V430.4h-1.6zM873.6 417.6h1.6V430.4h-1.6zM875.2 417.6h1.6V427.2h-1.6zM876.8 417.6h1.6V430.4h-1.6zM878.4 417.6h1.6V432.0h-1.6zM880.0 417.6h1.6V427.2h-1.6zM881.6 417.6h1.6V430.4h-1.6zM883.2 417.6h1.6V430.4h-1.6zM884.8 417.6h1.6V430.4h-1.6zM886.4 417.6h1.6V430.4h-1.6zM888.0 417.6h1.6V430.4h-1.6zM889.6 420.8h1.6V430.4h-1.6zM891.2 417.6h1.6V430.4h-1.6zM892.8 417.6h1.6V427.2h-1.6zM894.4 417.6h1.6V427.2h-1.6zM896.0 420.8h1.6V430.4h-1.6zM897.6 417.6h1.6V430.4h-1.6zM899.2 417.6h1.6V430.4h-1.6zM900.8 417.6h1.6V430.4h-1.6zM902.4 417.6h1.6V430.4h-1.6zM904.0 420.8h1.6V430.4h-1.6zM905.6 417.6h1.6V430.4h-1.6zM907.2 417.6h1.6V430.4h-1.6zM908.8 417.6h1.6V430.4h-1.6zM910.4 417.6h1.6V430.4h-1.6zM912.0 417.6h1.6V430.4h-1.6zM913.6 417.6h1.6V430.4h-1.6zM915.2 417.6h1.6V430.4h-1.6zM916.8 420.8h1.6V430.4h-1.6zM918.4 417.6h1.6V430.4h-1.6zM920.0 417.6h1.6V427.2h-1.6zM921.6 417.6h1.6V430.4h-1.6zM923.2 417.6h1.6V430.4h-1.6zM924.8 417.6h1.6V430.4h-1.6zM926.4 417.6h1.6V430.4h-1.6zM928.0 417.6h1.6V430.4h-1.6zM929.6 417.6h1.6V430.4h-1.6zM931.2 417.6h1.6V430.4h-1.6zM932.8 417.6h1.6V427.2h-1.6zM934.4 417.6h1.6V430.4h-1.6zM936.0 417.6h1.6V427.2h-1.6zM937.6 417.6h1.6V430.4h-1.6zM939.2 420.8h1.6V430.4h-1.6zM940.8 417.6h1.6V432.0h-1.6zM942.4 417.6h1.6V427.2h-1.6zM944.0 417.6h1.6V430.4h-1.6zM945.6 417.6h1.6V430.4h-1.6zM947.2 417.6h1.6V430.4h-1.6zM948.8 420.8h1.6V430.4h-1.6zM950.4 417.6h1.6V430.4h-1.6zM952.0 417.6h1.6V430.4h-1.6zM953.6 417.6h1.6V427.2h-1.6zM955.2 417.6h1.6V427.2h-1.6zM956.8 417.6h1.6V430.4h-1.6zM958.4 417.6h1.6V432.0h-1.6zM960.0 417.6h1.6V430.4h-1.6zM961.6 417.6h1.6V427.2h-1.6zM1136.0 417.6h1.6V430.4h-1.6zM1137.6 417.6h1.6V430.4h-1.6zM1139.2 417.6h1.6V430.4h-1.6zM1140.8 417.6h1.6V430.4h-1.6zM1142.4 417.6h1.6V430.4h-1.6zM1144.0 420.8h1.6V427.2h-1.6zM1145.6 417.6h1.6V430.4h-1.6zM1147.2 417.6h1.6V427.2h-1.6zM1148.8 417.6h1.6V430.4h-1.6zM1150.4 417.6h1.6V430.4h-1.6zM1152.0 420.8h1.6V430.4h-1.6zM1153.6 417.6h1.6V430.4h-1.6zM1155.2 417.6h1.6V430.4h-1.6zM1156.8 417.6h1.6V427.2h-1.6zM1158.4 417.6h1.6V430.4h-1.6zM1160.0 417.6h1.6V427.2h-1.6zM1161.6 417.6h1.6V430.4h-1.6zM1163.2 417.6h1.6V430.4h-1.6zM1164.8 420.8h1.6V430.4h-1.6zM1166.4 417.6h1.6V430.4h-1.6zM1168.0 417.6h1.6V430.4h-1.6zM1169.6 417.6h1.6V427.2h-1.6zM1171.2 417.6h1.6V430.4h-1.6zM1172.8 417.6h1.6V430.4h-1.6zM1174.4 417.6h1.6V430.4h-1.6zM1176.0 417.6h1.6V430.4h-1.6zM1177.6 417.6h1.6V430.4h-1.6zM1179.2 420.8h1.6V430.4h-1.6zM1180.8 420.8h1.6V430.4h-1.6zM1182.4 417.6h1.6V427.2h-1.6zM1184.0 417.6h1.6V432.0h-1.6zM1185.6 417.6h1.6V430.4h-1.6zM1187.2 417.6h1.6V430.4h-1.6zM1188.8 417.6h1.6V427.2h-1.6zM1190.4 417.6h1.6V430.4h-1.6zM1192.0 417.6h1.6V433.6h-1.6zM1193.6 417.6h1.6V430.4h-1.6zM1195.2 417.6h1.6V430.4h-1.6zM1196.8 417.6h1.6V427.2h-1.6zM1198.4 417.6h1.6V430.4h-1.6zM1200.0 417.6h1.6V430.4h-1.6zM1201.6 417.6h1.6V430.4h-1.6zM1203.2 417.6h1.6V427.2h-1.6zM1204.8 417.6h1.6V430.4h-1.6zM1206.4 417.6h1.6V430.4h-1.6zM1208.0 420.8h1.6V432.0h-1.6zM1209.6 417.6h1.6V430.4h-1.6zM1211.2 417.6h1.6V430.4h-1.6zM1212.8 417.6h1.6V430.4h-1.6zM1214.4 417.6h1.6V430.4h-1.6zM1216.0 417.6h1.6V430.4h-1.6zM1217.6 416.0h1.6V430.4h-1.6zM1219.2 417.6h1.6V430.4h-1.6zM1220.8 417.6h1.6V430.4h-1.6zM1222.4 417.6h1.6V430.4h-1.6zM1224.0 416.0h1.6V430.4h-1.6zM1225.6 417.6h1.6V430.4h-1.6zM1227.2 417.6h1.6V430.4h-1.6zM1228.8 417.6h1.6V430.4h-1.6zM1230.4 417.6h1.6V430.4h-1.6zM1232.0 417.6h1.6V427.2h-1.6zM1233.6 417.6h1.6V430.4h-1.6zM1235.2 417.6h1.6V427.2h-1.6zM1236.8 417.6h1.6V427.2h-1.6zM1238.4 417.6h1.6V430.4h-1.6zM1240.0 417.6h1.6V430.4h-1.6zM1241.6 417.6h1.6V430.4h-1.6zM1243.2 420.8h1.6V430.4h-1.6zM1244.8 417.6h1.6V433.6h-1.6zM1246.4 420.8h1.6V427.2h-1.6zM1248.0 417.6h1.6V430.4h-1.6zM1249.6 420.8h1.6V430.4h-1.6zM1251.2 417.6h1.6V430.4h-1.6zM25.6 571.2h1.6V584.0h-1.6zM27.2 571.2h1.6V584.0h-1.6zM28.8 571.2h1.6V584.0h-1.6zM30.4 571.2h1.6V580.8h-1.6zM32.0 571.2h1.6V584.0h-1.6zM33.6 571.2h1.6V584.0h-1.6zM35.2 571.2h1.6V584.0h-1.6zM36.8 571.2h1.6V580.8h-1.6zM38.4 571.2h1.6V585.6h-1.6zM40.0 571.2h1.6V584.0h-1.6zM41.6 571.2h1.6V580.8h-1.6zM43.2 571.2h1.6V584.0h-1.6zM44.8 571.2h1.6V584.0h-1.6zM46.4 571.2h1.6V584.0h-1.6zM48.0 571.2h1.6V584.0h-1.6zM49.6 571.2h1.6V580.8h-1.6zM51.2 568.0h1.6V584.0h-1.6zM52.8 571.2h1.6V584.0h-1.6zM54.4 571.2h1.6V584.0h-1.6zM56.0 571.2h1.6V585.6h-1.6zM57.6 571.2h1.6V584.0h-1.6zM59.2 571.2h1.6V584.0h-1.6zM60.8 571.2h1.6V584.0h-1.6zM62.4 571.2h1.6V584.0h-1.6zM64.0 571.2h1.6V584.0h-1.6zM65.6 571.2h1.6V584.0h-1.6zM67.2 571.2h1.6V584.0h-1.6zM68.8 571.2h1.6V584.0h-1.6zM70.4 571.2h1.6V580.8h-1.6zM72.0 574.4h1.6V584.0h-1.6zM73.6 571.2h1.6V584.0h-1.6zM75.2 571.2h1.6V584.0h-1.6zM76.8 571.2h1.6V584.0h-1.6zM78.4 571.2h1.6V584.0h-1.6zM80.0 571.2h1.6V584.0h-1.6zM81.6 571.2h1.6V580.8h-1.6zM83.2 571.2h1.6V584.0h-1.6zM84.8 571.2h1.6V584.0h-1.6zM86.4 571.2h1.6V584.0h-1.6zM88.0 571.2h1.6V580.8h-1.6zM89.6 571.2h1.6V584.0h-1.6zM91.2 571.2h1.6V584.0h-1.6zM92.8 571.2h1.6V585.6h-1.6zM94.4 571.2h1.6V584.0h-1.6zM96.0 571.2h1.6V584.0h-1.6zM97.6 571.2h1.6V584.0h-1.6zM99.2 571.2h1.6V580.8h-1.6zM100.8 568.0h1.6V584.0h-1.6zM102.4 571.2h1.6V584.0h-1.6zM104.0 571.2h1.6V584.0h-1.6zM105.6 571.2h1.6V580.8h-1.6zM107.2 571.2h1.6V584.0h-1.6zM108.8 571.2h1.6V584.0h-1.6zM110.4 574.4h1.6V584.0h-1.6zM112.0 571.2h1.6V584.0h-1.6zM113.6 571.2h1.6V584.0h-1.6zM115.2 568.0h1.6V584.0h-1.6zM116.8 571.2h1.6V580.8h-1.6zM118.4 571.2h1.6V584.0h-1.6zM120.0 571.2h1.6V584.0h-1.6zM121.6 571.2h1.6V585.6h-1.6zM123.2 571.2h1.6V584.0h-1.6zM124.8 571.2h1.6V580.8h-1.6zM126.4 571.2h1.6V584.0h-1.6zM300.8 571.2h1.6V584.0h-1.6zM302.4 571.2h1.6V584.0h-1.6zM304.0 571.2h1.6V584.0h-1.6zM305.6 571.2h1.6V584.0h-1.6zM307.2 568.0h1.6V580.8h-1.6zM308.8 571.2h1.6V584.0h-1.6zM310.4 571.2h1.6V580.8h-1.6zM312.0 571.2h1.6V584.0h-1.6zM313.6 571.2h1.6V584.0h-1.6zM315.2 571.2h1.6V584.0h-1.6zM316.8 571.2h1.6V580.8h-1.6zM318.4 571.2h1.6V580.8h-1.6zM320.0 571.2h1.6V580.8h-1.6zM321.6 571.2h1.6V584.0h-1.6zM323.2 571.2h1.6V584.0h-1.6zM324.8 571.2h1.6V584.0h-1.6zM326.4 571.2h1.6V584.0h-1.6zM328.0 571.2h1.6V584.0h-1.6zM329.6 571.2h1.6V584.0h-1.6zM331.2 571.2h1.6V584.0h-1.6zM332.8 568.0h1.6V584.0h-1.6zM334.4 571.2h1.6V584.0h-1.6zM336.0 571.2h1.6V584.0h-1.6zM337.6 571.2h1.6V584.0h-1.6zM339.2 571.2h1.6V584.0h-1.6zM340.8 571.2h1.6V584.0h-1.6zM342.4 571.2h1.6V584.0h-1.6zM344.0 571.2h1.6V584.0h-1.6zM345.6 571.2h1.6V580.8h-1.6zM347.2 571.2h1.6V584.0h-1.6zM348.8 574.4h1.6V584.0h-1.6zM350.4 571.2h1.6V584.0h-1.6zM352.0 571.2h1.6V584.0h-1.6zM353.6 571.2h1.6V584.0h-1.6zM355.2 571.2h1.6V584.0h-1.6zM356.8 571.2h1.6V584.0h-1.6zM358.4 571.2h1.6V584.0h-1.6zM360.0 571.2h1.6V584.0h-1.6zM361.6 571.2h1.6V584.0h-1.6zM363.2 571.2h1.6V584.0h-1.6zM364.8 571.2h1.6V584.0h-1.6zM366.4 571.2h1.6V584.0h-1.6zM368.0 571.2h1.6V580.8h-1.6zM369.6 571.2h1.6V584.0h-1.6zM371.2 574.4h1.6V584.0h-1.6zM372.8 571.2h1.6V584.0h-1.6zM374.4 571.2h1.6V584.0h-1.6zM376.0 568.0h1.6V584.0h-1.6zM377.6 571.2h1.6V584.0h-1.6zM379.2 571.2h1.6V584.0h-1.6zM380.8 571.2h1.6V584.0h-1.6zM382.4 571.2h1.6V584.0h-1.6zM384.0 571.2h1.6V584.0h-1.6zM385.6 571.2h1.6V580.8h-1.6zM387.2 571.2h1.6V584.0h-1.6zM388.8 571.2h1.6V585.6h-1.6zM390.4 571.2h1.6V584.0h-1.6zM392.0 571.2h1.6V580.8h-1.6zM393.6 571.2h1.6V584.0h-1.6zM395.2 571.2h1.6V584.0h-1.6zM396.8 571.2h1.6V584.0h-1.6zM398.4 571.2h1.6V584.0h-1.6zM400.0 571.2h1.6V584.0h-1.6zM401.6 571.2h1.6V584.0h-1.6zM403.2 571.2h1.6V580.8h-1.6zM404.8 571.2h1.6V580.8h-1.6zM406.4 571.2h1.6V584.0h-1.6zM408.0 571.2h1.6V584.0h-1.6zM409.6 571.2h1.6V584.0h-1.6zM411.2 571.2h1.6V584.0h-1.6zM412.8 571.2h1.6V584.0h-1.6zM414.4 574.4h1.6V584.0h-1.6zM416.0 571.2h1.6V584.0h-1.6zM417.6 571.2h1.6V584.0h-1.6zM419.2 571.2h1.6V584.0h-1.6zM420.8 571.2h1.6V584.0h-1.6zM422.4 571.2h1.6V584.0h-1.6zM424.0 571.2h1.6V582.4h-1.6zM425.6 571.2h1.6V584.0h-1.6zM427.2 571.2h1.6V584.0h-1.6zM428.8 571.2h1.6V584.0h-1.6zM430.4 574.4h1.6V584.0h-1.6zM432.0 571.2h1.6V584.0h-1.6zM433.6 571.2h1.6V584.0h-1.6zM435.2 571.2h1.6V584.0h-1.6zM436.8 571.2h1.6V584.0h-1.6zM438.4 571.2h1.6V584.0h-1.6zM440.0 571.2h1.6V584.0h-1.6zM441.6 571.2h1.6V584.0h-1.6zM443.2 571.2h1.6V584.0h-1.6zM444.8 571.2h1.6V584.0h-1.6zM446.4 571.2h1.6V584.0h-1.6zM448.0 571.2h1.6V584.0h-1.6zM449.6 571.2h1.6V584.0h-1.6zM451.2 571.2h1.6V580.8h-1.6zM452.8 571.2h1.6V584.0h-1.6zM454.4 571.2h1.6V584.0h-1.6zM456.0 571.2h1.6V584.0h-1.6zM457.6 574.4h1.6V584.0h-1.6zM459.2 571.2h1.6V584.0h-1.6zM460.8 571.2h1.6V584.0h-1.6zM636.8 571.2h1.6V584.0h-1.6zM638.4 571.2h1.6V584.0h-1.6zM640.0 571.2h1.6V584.0h-1.6zM641.6 571.2h1.6V584.0h-1.6zM643.2 571.2h1.6V584.0h-1.6zM644.8 571.2h1.6V580.8h-1.6zM646.4 571.2h1.6V584.0h-1.6zM648.0 571.2h1.6V584.0h-1.6zM649.6 571.2h1.6V584.0h-1.6zM651.2 571.2h1.6V584.0h-1.6zM652.8 571.2h1.6V584.0h-1.6zM654.4 571.2h1.6V584.0h-1.6zM656.0 571.2h1.6V584.0h-1.6zM657.6 571.2h1.6V584.0h-1.6zM659.2 571.2h1.6V584.0h-1.6zM660.8 571.2h1.6V584.0h-1.6zM662.4 571.2h1.6V584.0h-1.6zM664.0 571.2h1.6V584.0h-1.6zM665.6 571.2h1.6V584.0h-1.6zM667.2 571.2h1.6V584.0h-1.6zM668.8 571.2h1.6V584.0h-1.6zM670.4 571.2h1.6V584.0h-1.6zM672.0 571.2h1.6V584.0h-1.6zM673.6 571.2h1.6V584.0h-1.6zM675.2 571.2h1.6V584.0h-1.6zM676.8 571.2h1.6V584.0h-1.6zM678.4 571.2h1.6V584.0h-1.6zM680.0 571.2h1.6V584.0h-1.6zM681.6 571.2h1.6V584.0h-1.6zM683.2 571.2h1.6V584.0h-1.6zM684.8 568.0h1.6V584.0h-1.6zM686.4 571.2h1.6V584.0h-1.6zM688.0 571.2h1.6V585.6h-1.6zM689.6 574.4h1.6V584.0h-1.6zM691.2 571.2h1.6V584.0h-1.6zM692.8 571.2h1.6V584.0h-1.6zM694.4 571.2h1.6V584.0h-1.6zM696.0 571.2h1.6V584.0h-1.6zM697.6 571.2h1.6V584.0h-1.6zM699.2 568.0h1.6V584.0h-1.6zM700.8 571.2h1.6V584.0h-1.6zM702.4 571.2h1.6V584.0h-1.6zM704.0 571.2h1.6V584.0h-1.6zM705.6 571.2h1.6V584.0h-1.6zM707.2 571.2h1.6V584.0h-1.6zM708.8 571.2h1.6V584.0h-1.6zM710.4 571.2h1.6V584.0h-1.6zM712.0 571.2h1.6V584.0h-1.6zM713.6 571.2h1.6V584.0h-1.6zM715.2 571.2h1.6V585.6h-1.6zM716.8 571.2h1.6V584.0h-1.6zM718.4 571.2h1.6V584.0h-1.6zM720.0 571.2h1.6V584.0h-1.6zM721.6 571.2h1.6V580.8h-1.6zM723.2 571.2h1.6V584.0h-1.6zM724.8 571.2h1.6V584.0h-1.6zM726.4 571.2h1.6V584.0h-1.6zM728.0 571.2h1.6V584.0h-1.6zM729.6 571.2h1.6V580.8h-1.6zM731.2 571.2h1.6V584.0h-1.6zM732.8 571.2h1.6V584.0h-1.6zM734.4 571.2h1.6V584.0h-1.6zM736.0 571.2h1.6V584.0h-1.6zM737.6 571.2h1.6V584.0h-1.6zM739.2 574.4h1.6V584.0h-1.6zM740.8 571.2h1.6V584.0h-1.6zM742.4 571.2h1.6V584.0h-1.6zM744.0 571.2h1.6V585.6h-1.6zM745.6 571.2h1.6V584.0h-1.6zM747.2 571.2h1.6V584.0h-1.6zM748.8 571.2h1.6V584.0h-1.6zM750.4 574.4h1.6V584.0h-1.6zM752.0 571.2h1.6V584.0h-1.6zM753.6 571.2h1.6V584.0h-1.6zM755.2 571.2h1.6V584.0h-1.6zM756.8 571.2h1.6V584.0h-1.6zM758.4 571.2h1.6V584.0h-1.6zM760.0 571.2h1.6V584.0h-1.6zM761.6 571.2h1.6V584.0h-1.6zM763.2 571.2h1.6V584.0h-1.6zM764.8 571.2h1.6V584.0h-1.6zM766.4 571.2h1.6V584.0h-1.6zM768.0 571.2h1.6V584.0h-1.6zM769.6 571.2h1.6V584.0h-1.6zM771.2 571.2h1.6V584.0h-1.6zM772.8 571.2h1.6V584.0h-1.6zM774.4 571.2h1.6V584.0h-1.6zM776.0 571.2h1.6V584.0h-1.6zM777.6 571.2h1.6V584.0h-1.6zM779.2 571.2h1.6V584.0h-1.6zM780.8 571.2h1.6V584.0h-1.6zM782.4 571.2h1.6V580.8h-1.6zM784.0 571.2h1.6V584.0h-1.6zM785.6 571.2h1.6V584.0h-1.6zM787.2 571.2h1.6V584.0h-1.6zM788.8 571.2h1.6V584.0h-1.6zM790.4 571.2h1.6V584.0h-1.6zM792.0 571.2h1.6V584.0h-1.6zM793.6 571.2h1.6V584.0h-1.6zM795.2 571.2h1.6V584.0h-1.6zM971.2 571.2h1.6V584.0h-1.6zM972.8 571.2h1.6V584.0h-1.6zM974.4 571.2h1.6V584.0h-1.6zM976.0 571.2h1.6V584.0h-1.6zM977.6 571.2h1.6V584.0h-1.6zM979.2 571.2h1.6V584.0h-1.6zM980.8 571.2h1.6V584.0h-1.6zM982.4 571.2h1.6V584.0h-1.6zM984.0 571.2h1.6V584.0h-1.6zM985.6 571.2h1.6V584.0h-1.6zM987.2 571.2h1.6V584.0h-1.6zM988.8 568.0h1.6V584.0h-1.6zM990.4 571.2h1.6V585.6h-1.6zM992.0 571.2h1.6V584.0h-1.6zM993.6 571.2h1.6V584.0h-1.6zM995.2 574.4h1.6V584.0h-1.6zM996.8 571.2h1.6V584.0h-1.6zM998.4 571.2h1.6V584.0h-1.6zM1000.0 571.2h1.6V584.0h-1.6zM1001.6 571.2h1.6V584.0h-1.6zM1003.2 571.2h1.6V584.0h-1.6zM1004.8 571.2h1.6V584.0h-1.6zM1006.4 571.2h1.6V580.8h-1.6zM1008.0 571.2h1.6V584.0h-1.6zM1009.6 571.2h1.6V584.0h-1.6zM1011.2 571.2h1.6V584.0h-1.6zM1012.8 571.2h1.6V584.0h-1.6zM1014.4 571.2h1.6V580.8h-1.6zM1016.0 571.2h1.6V584.0h-1.6zM1017.6 571.2h1.6V584.0h-1.6zM1019.2 571.2h1.6V584.0h-1.6zM1020.8 571.2h1.6V584.0h-1.6zM1022.4 571.2h1.6V584.0h-1.6zM1024.0 571.2h1.6V584.0h-1.6zM1025.6 571.2h1.6V584.0h-1.6zM1027.2 571.2h1.6V584.0h-1.6zM1028.8 571.2h1.6V584.0h-1.6zM1030.4 571.2h1.6V584.0h-1.6zM1032.0 571.2h1.6V584.0h-1.6zM1033.6 571.2h1.6V584.0h-1.6zM1035.2 571.2h1.6V584.0h-1.6zM1036.8 574.4h1.6V584.0h-1.6zM1038.4 571.2h1.6V580.8h-1.6zM1040.0 571.2h1.6V584.0h-1.6zM1041.6 571.2h1.6V584.0h-1.6zM1043.2 571.2h1.6V584.0h-1.6zM1044.8 574.4h1.6V584.0h-1.6zM1046.4 574.4h1.6V584.0h-1.6zM1048.0 571.2h1.6V584.0h-1.6zM1049.6 571.2h1.6V584.0h-1.6zM1051.2 571.2h1.6V584.0h-1.6zM1052.8 571.2h1.6V584.0h-1.6zM1054.4 571.2h1.6V584.0h-1.6zM1056.0 571.2h1.6V584.0h-1.6zM1057.6 571.2h1.6V584.0h-1.6zM1059.2 571.2h1.6V584.0h-1.6zM1060.8 571.2h1.6V584.0h-1.6zM1062.4 571.2h1.6V584.0h-1.6zM1064.0 571.2h1.6V584.0h-1.6zM1065.6 571.2h1.6V584.0h-1.6zM1067.2 571.2h1.6V584.0h-1.6zM1068.8 571.2h1.6V584.0h-1.6zM1070.4 571.2h1.6V584.0h-1.6zM1072.0 571.2h1.6V584.0h-1.6zM1073.6 571.2h1.6V584.0h-1.6zM1075.2 571.2h1.6V584.0h-1.6zM1076.8 571.2h1.6V580.8h-1.6zM1078.4 571.2h1.6V584.0h-1.6zM1080.0 571.2h1.6V584.0h-1.6zM1081.6 571.2h1.6V584.0h-1.6zM1083.2 571.2h1.6V584.0h-1.6zM1084.8 571.2h1.6V584.0h-1.6zM1086.4 574.4h1.6V584.0h-1.6zM1088.0 574.4h1.6V584.0h-1.6zM1089.6 571.2h1.6V580.8h-1.6zM1091.2 571.2h1.6V584.0h-1.6zM1092.8 571.2h1.6V584.0h-1.6zM1094.4 571.2h1.6V580.8h-1.6zM1096.0 571.2h1.6V584.0h-1.6zM1097.6 571.2h1.6V580.8h-1.6zM1099.2 571.2h1.6V580.8h-1.6zM1100.8 571.2h1.6V584.0h-1.6zM1102.4 571.2h1.6V584.0h-1.6zM1104.0 571.2h1.6V584.0h-1.6zM1105.6 571.2h1.6V585.6h-1.6zM1107.2 571.2h1.6V584.0h-1.6zM1108.8 574.4h1.6V584.0h-1.6zM1110.4 571.2h1.6V580.8h-1.6zM1112.0 571.2h1.6V584.0h-1.6zM1113.6 571.2h1.6V584.0h-1.6zM1115.2 574.4h1.6V584.0h-1.6zM1116.8 571.2h1.6V580.8h-1.6zM1118.4 571.2h1.6V584.0h-1.6zM1120.0 571.2h1.6V584.0h-1.6zM1121.6 571.2h1.6V580.8h-1.6zM1123.2 571.2h1.6V584.0h-1.6zM1124.8 571.2h1.6V584.0h-1.6zM1126.4 571.2h1.6V584.0h-1.6zM1128.0 571.2h1.6V584.0h-1.6zM1129.6 571.2h1.6V584.0h-1.6z" fill="#00ffff"/>
<path d="M126.2 578.0 L129.5 535.0 L132.5 490.0 L134.5 440.0 L135.0 424.0" fill="none" stroke="#00ffff" stroke-width="2.5" stroke-linejoin="round"/>
<path d="M293.0 424.0 L294.5 440.0 L296.5 480.0 L299.8 540.0 L302.2 570.0 L303.0 578.0" fill="none" stroke="#00ffff" stroke-width="2.5" stroke-linejoin="round"/>
<path d="M461.0 578.0 L463.3 540.0 L467.0 480.0 L468.9 440.0 L469.5 424.0" fill="none" stroke="#00ffff" stroke-width="2.5" stroke-linejoin="round"/>
<path d="M628.5 424.0 L629.2 440.0 L631.0 480.0 L634.0 535.0 L636.0 568.0 L637.0 578.0" fill="none" stroke="#00ffff" stroke-width="2.5" stroke-linejoin="round"/>
<path d="M795.5 578.0 L796.4 570.0 L798.9 535.0 L801.5 490.0 L803.5 440.0 L804.0 424.0" fill="none" stroke="#00ffff" stroke-width="2.5" stroke-linejoin="round"/>
<path d="M962.5 424.0 L964.0 440.0 L965.9 480.0 L968.8 535.0 L971.5 565.0 L972.5 578.0" fill="none" stroke="#00ffff" stroke-width="2.5" stroke-linejoin="round"/>
<path d="M1129.5 578.0 L1130.0 570.0 L1133.0 535.0 L1135.7 490.0 L1136.9 440.0 L1137.5 424.0" fill="none" stroke="#00ffff" stroke-width="2.5" stroke-linejoin="round"/>
<path d="M121.5 580.0h2V600.0h-2zM456.2 580.0h2V603.0h-2zM790.0 580.0h2V600.0h-2zM1124.6 580.0h2V609.0h-2zM132.7 404.4h2V420.0h-2zM467.9 411.0h2V420.0h-2zM801.5 408.0h2V420.0h-2zM1136.4 408.0h2V420.0h-2zM290.8 408.0h2V420.0h-2zM624.0 405.3h2V420.0h-2zM959.2 411.0h2V420.0h-2z" fill="#00ffff"/>
<!-- ===== HEADER ===== -->
<!-- Hantek logo -->
<g fill="#ffff00" stroke="#1a18c8" stroke-width="1.4" paint-order="stroke" fill-rule="evenodd">
<path d="M40 11H45.3V18.5H52.3V11H57.8V33.6H52.3V24.2H45.3V33.6H40Z"/>
<path d="M62 15.8H81.8V29.9H86V15.8H103.5V33.5H98.5V19.5H91.5V33.5H62V23.6H76.4V17.9H69V21H62Z M67.4 26V31.4H76.4V26Z"/>
<path d="M108.7 11H114V15.8H120.2V20H114V29.6H120.2V33.5H108.7Z"/>
<path d="M123.4 15.9H142.5V26H128.3V29.75H147V11H151.9V20.75L160.5 15.9H163.5L157.1 23.75L163.5 31.25V33.5H159.75L152.6 27.5H151.9V33.5H123.4Z M128.3 19.6V21.9H137.3V19.6Z"/>
</g>
<!-- icon box 1: dual wave -->
<rect x="232.8" y="5.3" width="35.4" height="32.4" fill="#000" stroke="#c8c2b0" stroke-width="1.6"/>
<path d="M234.00 15.88 L234.50 15.08 L235.00 14.25 L235.50 13.42 L236.00 12.62 L236.50 11.89 L237.00 11.24 L237.50 10.72 L238.00 10.32 L238.50 10.08 L239.00 10.00 L239.50 10.08 L240.00 10.32 L240.50 10.72 L241.00 11.24 L241.50 11.89 L242.00 12.62 L242.50 13.42 L243.00 14.25 L243.50 15.08 L244.00 15.88 L244.50 16.61 L245.00 17.26 L245.50 17.78 L246.00 18.18 L246.50 18.42 L247.00 18.50 L247.50 18.42 L248.00 18.18 L248.50 17.78 L249.00 17.26 L249.50 16.61 L250.00 15.88 L250.50 15.08 L251.00 14.25 L251.50 13.42 L252.00 12.62 L252.50 11.89 L253.00 11.24 L253.50 10.72 L254.00 10.32 L254.50 10.08 L255.00 10.00 L255.50 10.08 L256.00 10.32 L256.50 10.72 L257.00 11.24 L257.50 11.89 L258.00 12.62 L258.50 13.42 L259.00 14.25 L259.50 15.08 L260.00 15.88 L260.50 16.61 L261.00 17.26 L261.50 17.78 L262.00 18.18 L262.50 18.42 L263.00 18.50 L263.50 18.42 L264.00 18.18 L264.50 17.78 L265.00 17.26 L265.50 16.61 L266.00 15.88 L266.50 15.08 L267.00 14.25 L267.50 13.42" fill="none" stroke="#ffff00" stroke-width="3.6"/><path d="M234.00 30.38 L234.50 29.58 L235.00 28.75 L235.50 27.92 L236.00 27.12 L236.50 26.39 L237.00 25.74 L237.50 25.22 L238.00 24.82 L238.50 24.58 L239.00 24.50 L239.50 24.58 L240.00 24.82 L240.50 25.22 L241.00 25.74 L241.50 26.39 L242.00 27.12 L242.50 27.92 L243.00 28.75 L243.50 29.58 L244.00 30.38 L244.50 31.11 L245.00 31.76 L245.50 32.28 L246.00 32.68 L246.50 32.92 L247.00 33.00 L247.50 32.92 L248.00 32.68 L248.50 32.28 L249.00 31.76 L249.50 31.11 L250.00 30.38 L250.50 29.58 L251.00 28.75 L251.50 27.92 L252.00 27.12 L252.50 26.39 L253.00 25.74 L253.50 25.22 L254.00 24.82 L254.50 24.58 L255.00 24.50 L255.50 24.58 L256.00 24.82 L256.50 25.22 L257.00 25.74 L257.50 26.39 L258.00 27.12 L258.50 27.92 L259.00 28.75 L259.50 29.58 L260.00 30.38 L260.50 31.11 L261.00 31.76 L261.50 32.28 L262.00 32.68 L262.50 32.92 L263.00 33.00 L263.50 32.92 L264.00 32.68 L264.50 32.28 L265.00 31.76 L265.50 31.11 L266.00 30.38 L266.50 29.58 L267.00 28.75 L267.50 27.92" fill="none" stroke="#00ffff" stroke-width="3.6"/>
<!-- icon box 2: green line -->
<rect x="272.8" y="5.3" width="35.4" height="32.4" fill="#000" stroke="#c8c2b0" stroke-width="1.6"/>
<path d="M279 32.5L301.5 10" stroke="#00ff00" stroke-width="3.6" stroke-linecap="round"/>
<!-- icon box 3: grey blob -->
<rect x="313.2" y="6" width="34.4" height="31" fill="#000" stroke="#cfcdbd" stroke-width="1.8"/>
<path d="M329.8 8.8L333.4 8.2L338 9.5L342.3 12.4L343.9 21.8L341.2 24.4L337 24.4L336 33.2L331.9 34.8L320.4 34.3L316.3 31.2L317.8 21.8L325.6 20.7L325.6 11.4Z" fill="#9c9c9c"/>
<path d="M322 24V33 M327 22V34 M331 12V33 M335 11V23 M339 14V23" stroke="#6a6a6a" stroke-width="1.2" opacity="0.7"/>
<!-- empty rounded box -->
<rect x="352.8" y="3.8" width="72" height="34" rx="4" fill="none" stroke="#5f5e56" stroke-width="1.6"/>
<path d="M352.8 34V8a4 4 0 0 1 4 -4H421" fill="none" stroke="#0c0cc8" stroke-width="1.8"/>

<!-- pulse icon -->
<g fill="none" stroke="#e6ffff" stroke-width="2.7" stroke-linejoin="round">
<path d="M434.5 33.8H441.6V9.6H456.3V36.5H466.5"/>
</g>
<g fill="none" stroke="#e6ffff" stroke-width="1.8">
<path d="M444.6 4.8V14 M447.8 4.8V14 M451 4.8V14 M454.2 4.8V14"/>
<path d="M437.4 27V37.8 M459.4 29V37.8 M462.6 29V37.8 M465.8 29V37.8"/>
</g>
<!-- T -->
<path d="M477.8 7H499V12.2H490.5V34.5H484.5V12.2H477.8Z" fill="#00ff00"/>
<!-- key -->
<g fill="#504e36">
<rect x="512.4" y="19.9" width="28" height="5.8"/>
<rect x="517.7" y="25" width="2.9" height="6"/><rect x="523.5" y="25" width="2.9" height="6"/><rect x="529.3" y="25" width="3.9" height="6"/>
</g>
<rect x="540.6" y="16.2" width="6.2" height="15.2" rx="3" fill="none" stroke="#504e36" stroke-width="3.2"/>
<!-- floppy -->
<g fill="none" stroke="#d8ffff" stroke-width="2.2">
<path d="M554.3 5.7H584.2V35.1H559.5L554.3 29.9Z"/>
<path d="M559.6 5.7V19.2H580V5.7"/>
</g>
<path d="M561.8 23.8H577.8V35.2H561.8Z" fill="#d8ffff"/>
<path d="M564.2 25.7H567.6V34H564.2Z" fill="#38309c"/>
<!-- printer -->
<g fill="none" stroke="#504e36" stroke-width="2.6">
<path d="M602.8 21V6.2H619.6V21"/>
<path d="M595.9 22.7H625.4V36.6H595.9Z"/>
</g>
<g fill="#504e36">
<rect x="604.9" y="9.4" width="11.1" height="1.8"/><rect x="604.9" y="13.2" width="11.1" height="1.8"/><rect x="604.9" y="17.1" width="11.1" height="1.8"/>
<rect x="599" y="27.7" width="23.3" height="3.9"/>
</g>
<!-- separator -->
<rect x="633" y="1" width="1.6" height="42.2" fill="#000"/>
<rect x="634.6" y="1" width="1.6" height="42.2" fill="#4a5cf8"/>

<!-- memory depth box -->
<rect x="645" y="4.5" width="2.4" height="34.4" fill="#8a8a8a"/>
<rect x="823.6" y="4.5" width="2" height="34.4" fill="#8a8a8a"/>
<rect x="650.2" y="7.2" width="171.2" height="29" fill="#000" stroke="#ff6600" stroke-width="4.4"/>
<path d="M652.60 18.64 L653.00 20.75 L653.40 22.91 L653.80 25.04 L654.20 27.04 L654.60 28.84 L655.00 30.36 L655.40 31.54 L655.80 32.32 L656.20 32.68 L656.60 32.60 L657.00 32.08 L657.40 31.14 L657.80 29.83 L658.20 28.20 L658.60 26.31 L659.00 24.25 L659.40 22.10 L659.80 19.95 L660.20 17.89 L660.60 16.00 L661.00 14.37 L661.40 13.06 L661.80 12.12 L662.20 11.60 L662.60 11.52 L663.00 11.88 L663.40 12.66 L663.80 13.84 L664.20 15.36 L664.60 17.16 L665.00 19.16 L665.40 21.29 L665.80 23.45 L666.20 25.56 L666.60 27.52 L667.00 29.25 L667.40 30.69 L667.80 31.77 L668.20 32.45 L668.60 32.70 L669.00 32.51 L669.40 31.88 L669.80 30.85 L670.20 29.45 L670.60 27.75 L671.00 25.81 L671.40 23.72 L671.80 21.56 L672.20 19.42 L672.60 17.40 L673.00 15.57 L673.40 14.01 L673.80 12.79 L674.20 11.95 L674.60 11.54 L675.00 11.57 L675.40 12.04 L675.80 12.92 L676.20 14.19 L676.60 15.78 L677.00 17.64 L677.40 19.68 L677.80 21.83 L678.20 23.99 L678.60 26.06 L679.00 27.97 L679.40 29.64 L679.80 31.00 L680.20 31.98 L680.60 32.55 L681.00 32.69 L681.40 32.39 L681.80 31.66 L682.20 30.53 L682.60 29.05 L683.00 27.28 L683.40 25.30 L683.80 23.18 L684.20 21.02 L684.60 18.90 L685.00 16.92 L685.40 15.15 L685.80 13.67 L686.20 12.54 L686.60 11.81 L687.00 11.51 L687.40 11.65 L687.80 12.22 L688.20 13.20 L688.60 14.56 L689.00 16.23 L689.40 18.14 L689.80 20.21 L690.20 22.37 L690.60 24.52 L691.00 26.56 L691.40 28.42 L691.80 30.01 L692.20 31.28 L692.60 32.16 L693.00 32.63 L693.40 32.66 L693.80 32.25 L694.20 31.41 L694.60 30.19 L695.00 28.63 L695.40 26.80 L695.80 24.78 L696.20 22.64 L696.60 20.48 L697.00 18.39 L697.40 16.45 L697.80 14.75 L698.20 13.35 L698.60 12.32 L699.00 11.69 L699.40 11.50 L699.80 11.75 L700.20 12.43 L700.60 13.51 L701.00 14.95 L701.40 16.68 L701.80 18.64 L702.20 20.75 L702.60 22.91 L703.00 25.04 L703.40 27.04 L703.80 28.84 L704.20 30.36 L704.60 31.54 L705.00 32.32 L705.40 32.68 L705.80 32.60 L706.20 32.08 L706.60 31.14 L707.00 29.83 L707.40 28.20 L707.80 26.31 L708.20 24.25 L708.60 22.10 L709.00 19.95 L709.40 17.89 L709.80 16.00 L710.20 14.37 L710.60 13.06 L711.00 12.12 L711.40 11.60 L711.80 11.52 L712.20 11.88 L712.60 12.66 L713.00 13.84 L713.40 15.36 L713.80 17.16 L714.20 19.16 L714.60 21.29 L715.00 23.45 L715.40 25.56 L715.80 27.52 L716.20 29.25 L716.60 30.69 L717.00 31.77 L717.40 32.45 L717.80 32.70 L718.20 32.51 L718.60 31.88 L719.00 30.85 L719.40 29.45 L719.80 27.75 L720.20 25.81 L720.60 23.72 L721.00 21.56 L721.40 19.42 L721.80 17.40 L722.20 15.57 L722.60 14.01 L723.00 12.79 L723.40 11.95 L723.80 11.54 L724.20 11.57 L724.60 12.04 L725.00 12.92 L725.40 14.19 L725.80 15.78 L726.20 17.64 L726.60 19.68 L727.00 21.83 L727.40 23.99 L727.80 26.06 L728.20 27.97 L728.60 29.64 L729.00 31.00 L729.40 31.98 L729.80 32.55 L730.20 32.69 L730.60 32.39 L731.00 31.66 L731.40 30.53 L731.80 29.05 L732.20 27.28 L732.60 25.30 L733.00 23.18 L733.40 21.02 L733.80 18.90 L734.20 16.92 L734.60 15.15 L735.00 13.67 L735.40 12.54 L735.80 11.81 L736.20 11.51 L736.60 11.65 L737.00 12.22 L737.40 13.20 L737.80 14.56 L738.20 16.23 L738.60 18.14 L739.00 20.21 L739.40 22.37 L739.80 24.52 L740.20 26.56 L740.60 28.42 L741.00 30.01 L741.40 31.28 L741.80 32.16 L742.20 32.63 L742.60 32.66 L743.00 32.25 L743.40 31.41 L743.80 30.19 L744.20 28.63 L744.60 26.80 L745.00 24.78 L745.40 22.64 L745.80 20.48 L746.20 18.39 L746.60 16.45 L747.00 14.75 L747.40 13.35 L747.80 12.32 L748.20 11.69 L748.60 11.50 L749.00 11.75 L749.40 12.43 L749.80 13.51 L750.20 14.95 L750.60 16.68 L751.00 18.64 L751.40 20.75 L751.80 22.91 L752.20 25.04 L752.60 27.04 L753.00 28.84 L753.40 30.36 L753.80 31.54 L754.20 32.32 L754.60 32.68 L755.00 32.60 L755.40 32.08 L755.80 31.14 L756.20 29.83 L756.60 28.20 L757.00 26.31 L757.40 24.25 L757.80 22.10 L758.20 19.95 L758.60 17.89 L759.00 16.00 L759.40 14.37 L759.80 13.06 L760.20 12.12 L760.60 11.60 L761.00 11.52 L761.40 11.88 L761.80 12.66 L762.20 13.84 L762.60 15.36 L763.00 17.16 L763.40 19.16 L763.80 21.29 L764.20 23.45 L764.60 25.56 L765.00 27.52 L765.40 29.25 L765.80 30.69 L766.20 31.77 L766.60 32.45 L767.00 32.70 L767.40 32.51 L767.80 31.88 L768.20 30.85 L768.60 29.45 L769.00 27.75 L769.40 25.81 L769.80 23.72 L770.20 21.56 L770.60 19.42 L771.00 17.40 L771.40 15.57 L771.80 14.01 L772.20 12.79 L772.60 11.95 L773.00 11.54 L773.40 11.57 L773.80 12.04 L774.20 12.92 L774.60 14.19 L775.00 15.78 L775.40 17.64 L775.80 19.68 L776.20 21.83 L776.60 23.99 L777.00 26.06 L777.40 27.97 L777.80 29.64 L778.20 31.00 L778.60 31.98 L779.00 32.55 L779.40 32.69 L779.80 32.39 L780.20 31.66 L780.60 30.53 L781.00 29.05 L781.40 27.28 L781.80 25.30 L782.20 23.18 L782.60 21.02 L783.00 18.90 L783.40 16.92 L783.80 15.15 L784.20 13.67 L784.60 12.54 L785.00 11.81 L785.40 11.51 L785.80 11.65 L786.20 12.22 L786.60 13.20 L787.00 14.56 L787.40 16.23 L787.80 18.14 L788.20 20.21 L788.60 22.37 L789.00 24.52 L789.40 26.56 L789.80 28.42 L790.20 30.01 L790.60 31.28 L791.00 32.16 L791.40 32.63 L791.80 32.66 L792.20 32.25 L792.60 31.41 L793.00 30.19 L793.40 28.63 L793.80 26.80 L794.20 24.78 L794.60 22.64 L795.00 20.48 L795.40 18.39 L795.80 16.45 L796.20 14.75 L796.60 13.35 L797.00 12.32 L797.40 11.69 L797.80 11.50 L798.20 11.75 L798.60 12.43 L799.00 13.51 L799.40 14.95 L799.80 16.68 L800.20 18.64 L800.60 20.75 L801.00 22.91 L801.40 25.04 L801.80 27.04 L802.20 28.84 L802.60 30.36 L803.00 31.54 L803.40 32.32 L803.80 32.68 L804.20 32.60 L804.60 32.08 L805.00 31.14 L805.40 29.83 L805.80 28.20 L806.20 26.31 L806.60 24.25 L807.00 22.10 L807.40 19.95 L807.80 17.89 L808.20 16.00 L808.60 14.37 L809.00 13.06 L809.40 12.12 L809.80 11.60 L810.20 11.52 L810.60 11.88 L811.00 12.66 L811.40 13.84 L811.80 15.36 L812.20 17.16 L812.60 19.16 L813.00 21.29 L813.40 23.45 L813.80 25.56 L814.20 27.52 L814.60 29.25 L815.00 30.69 L815.40 31.77 L815.80 32.45 L816.20 32.70 L816.60 32.51 L817.00 31.88 L817.40 30.85 L817.80 29.45 L818.20 27.75 L818.60 25.81 L819.00 23.72" fill="none" stroke="#00ffff" stroke-width="3.4"/>

<!-- W box -->
<rect x="834.6" y="5.4" width="33.2" height="33.2" fill="#000" stroke="#b8b4a8" stroke-width="1.6"/>
<text x="836" y="33.5" font-size="32.5" fill="#e0ffff" stroke="#e0ffff" stroke-width="0.4" textLength="28.7" lengthAdjust="spacingAndGlyphs">W</text>

<!-- timebase pill -->
<rect x="875.6" y="5.6" width="158.4" height="33" rx="16" fill="#000" stroke="#55544a" stroke-width="1.6"/>
<path d="M1017 5.6H892a16 16 0 0 0 -16.4 16" fill="none" stroke="#1010e0" stroke-width="1.8"/>
<text x="909.5" y="33.6" font-size="31.5" fill="#ffffff" stroke="#000" stroke-width="1" textLength="90" lengthAdjust="spacingAndGlyphs">2.00us</text>

<!-- Menu -->
<text x="1130.5" y="32.2" font-size="31.5" fill="#e6ffff" stroke="#38309c" stroke-width="1" textLength="66" lengthAdjust="spacingAndGlyphs">Menu</text>

<!-- ===== time position label ===== -->
<path d="M582.8 44.6H694V66.8L689 71.8H648.2L639.1 82.6L630.2 71.8H587.8L582.8 66.8Z" fill="#3e66fc" stroke="#bcd8ff" stroke-width="1.2"/>
<text x="601.6" y="69" font-size="27" fill="#ffffff" stroke="#3e66fc" stroke-width="0.2" textLength="74.6" lengthAdjust="spacingAndGlyphs">0.000s</text>

<!-- ===== markers ===== -->
<path d="M1254.6 215.6V240.2L1233.2 228.9Z" fill="#ffff00"/>
<path d="M0 339.1H13.3L24.2 350.1L13.3 362.2H0Z" fill="#ffff00" stroke="#1a1ac0" stroke-width="1.2"/>
<path d="M2.2 347.2L6.2 343.6V359.6" fill="none" stroke="#1a1aa8" stroke-width="2.6" stroke-linejoin="round"/>
<path d="M0 571.8H14L24 583.5L14 595.6H0Z" fill="#00ffff" stroke="#3020a0" stroke-width="1.2"/>
<text x="0.5" y="592.5" font-size="22" font-weight="bold" fill="#40108a">2</text>

<!-- ===== FOOTER ===== -->
<!-- CH1 coupling -->
<g fill="#ffff00">
<rect x="25.6" y="730.1" width="28.2" height="4" rx="1.5"/>
<rect x="25.6" y="737.4" width="6.1" height="2.1"/><rect x="33.6" y="737.4" width="4.7" height="2.1"/><rect x="40.2" y="737.4" width="4.6" height="2.1"/><rect x="46.7" y="737.4" width="4.7" height="2.1"/>
</g>
<text x="25.6" y="756.8" font-size="20" fill="#ffff00" stroke="#ffff00" stroke-width="0.5" textLength="25.6" lengthAdjust="spacingAndGlyphs">DC</text>
<circle cx="78.6" cy="743.7" r="14.4" fill="none" stroke="#535137" stroke-width="2.4"/>
<text x="66.5" y="751.4" font-size="24.5" font-weight="bold" fill="#535137" textLength="21.5" lengthAdjust="spacingAndGlyphs">20</text>
<path d="M102.3 739.2H106.5V732.8H113V739.2H119V732.8H125.5V739.2H131.3" fill="none" stroke="#ffff00" stroke-width="2.6"/>
<path d="M102.3 747H106.5V753.5H113V747H119V753.5H125.5V747H131.3" fill="none" stroke="#8e8c84" stroke-width="2.6"/>
<rect x="138.8" y="724.4" width="131.8" height="35.6" rx="17.8" fill="#000"/>
<text x="166.6" y="755.6" font-size="30.5" fill="#ffff00" stroke="#000" stroke-width="1" textLength="74.3" lengthAdjust="spacingAndGlyphs">5.00V</text>
<rect x="273.6" y="723" width="1.3" height="42" fill="#000"/>
<rect x="274.9" y="723" width="1.4" height="42" fill="#4a5cf8"/>

<!-- CH2 coupling -->
<g fill="#00ffff">
<rect x="280.7" y="730.1" width="29.5" height="3.7" rx="1.5"/>
<rect x="282.6" y="737.4" width="5.1" height="2.1"/><rect x="289.6" y="737.4" width="4.7" height="2.1"/><rect x="296.2" y="737.4" width="4.6" height="2.1"/><rect x="302.7" y="737.4" width="4.7" height="2.1"/>
</g>
<text x="281.6" y="756.8" font-size="20" fill="#00ffff" stroke="#00ffff" stroke-width="0.5" textLength="25.6" lengthAdjust="spacingAndGlyphs">DC</text>
<circle cx="334.4" cy="743.7" r="14.4" fill="none" stroke="#535137" stroke-width="2.4"/>
<text x="322.3" y="751.4" font-size="24.5" font-weight="bold" fill="#535137" textLength="21.5" lengthAdjust="spacingAndGlyphs">20</text>
<path d="M360.6 740H365V733.5H371.5V740H377.5V733.5H384V740H390" fill="none" stroke="#00ffff" stroke-width="2.6"/>
<path d="M360.6 747H365V754H371.5V747H377.5V754H384V747H390" fill="none" stroke="#8e8c84" stroke-width="2.6"/>
<rect x="395" y="724.4" width="131.2" height="35.6" rx="17.8" fill="#000"/>
<text x="423.5" y="755.6" font-size="30.5" fill="#00ffff" stroke="#000" stroke-width="1" textLength="74" lengthAdjust="spacingAndGlyphs">10.0V</text>
<rect x="529.4" y="723" width="1.6" height="42" fill="#000"/>
<rect x="531" y="723" width="1.8" height="42" fill="#4a5cf8"/>

<!-- trigger -->
<text x="563.8" y="753.6" font-size="29" fill="#ffff00" stroke="#38309c" stroke-width="1" textLength="44.2" lengthAdjust="spacingAndGlyphs">CH1</text>
<path d="M616.5 756.5H627.5L634.5 730.5H644.5" fill="none" stroke="#c8e4ff" stroke-width="2.6"/>
<rect x="647.7" y="724" width="124.9" height="35.7" rx="17.8" fill="#000"/>
<text x="673" y="753.6" font-size="29" fill="#ffff00" stroke="#000" stroke-width="1" textLength="74" lengthAdjust="spacingAndGlyphs">7.60V</text>
<rect x="801.3" y="722" width="1.6" height="42.8" fill="#000"/>
<rect x="802.9" y="722" width="2.2" height="42.8" fill="#4a5cf8"/>

<!-- frequency -->
<rect x="820.6" y="724" width="208.2" height="35.7" rx="17.8" fill="#000"/>
<text x="847" y="753.6" font-size="29" fill="#ffff00" stroke="#000" stroke-width="1" textLength="154.8" lengthAdjust="spacingAndGlyphs">95.6400KHz</text>

<!-- date -->
<text x="1063.6" y="750.6" font-size="28.5" fill="#ffffff" stroke="#38309c" stroke-width="0.9" textLength="192" lengthAdjust="spacingAndGlyphs">23-Sep-14 19:38</text>

</svg>
</body></html>
